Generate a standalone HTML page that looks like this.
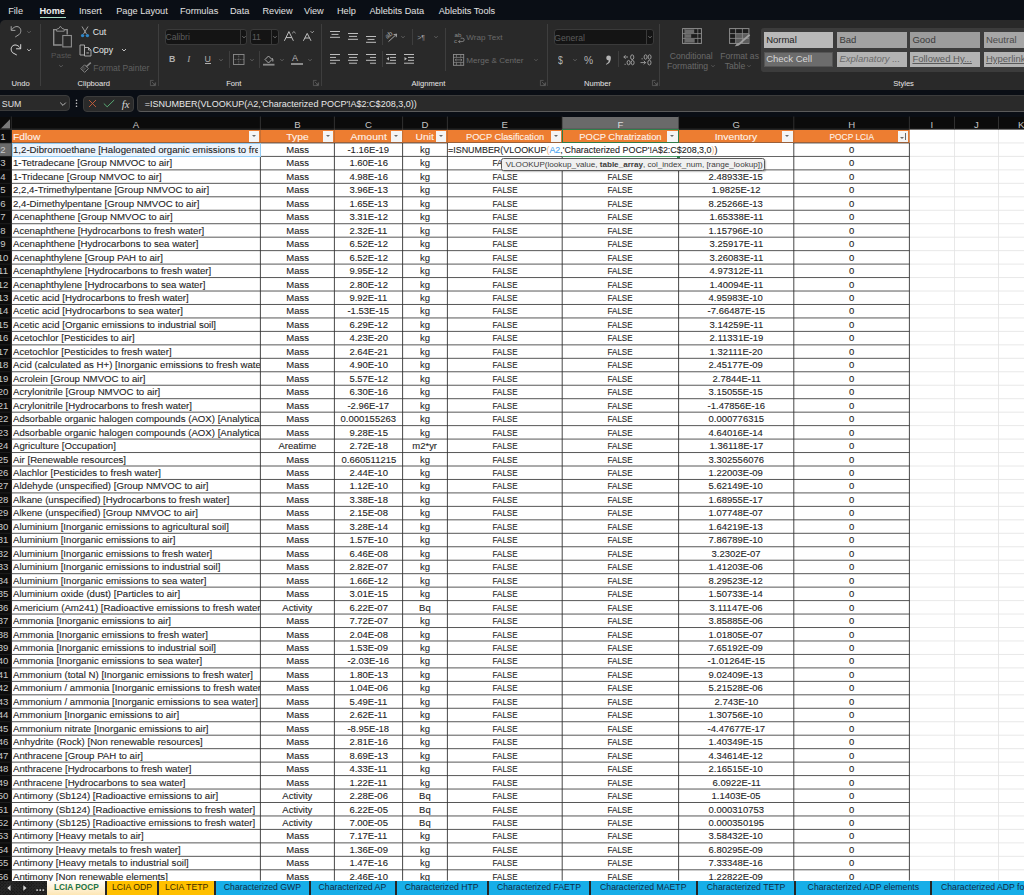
<!DOCTYPE html><html><head><meta charset="utf-8"><style>*{margin:0;padding:0;box-sizing:border-box}
html,body{width:1024px;height:895px;overflow:hidden;background:#0a0e15;font-family:"Liberation Sans",sans-serif}
.abs{position:absolute}
.colhdr{position:absolute;left:0;width:1024px;background:#0b0b0b}
.ch{position:absolute;text-align:center;color:#c4c4c4;font-size:9.6px}
.ch.sel{background:#6a6a6a;color:#dcdcdc}
.rhc{position:absolute;left:0;width:11.5px;overflow:hidden;background:#0b0b0b}
.rh{position:absolute;left:-5.5px;width:17px;color:#c8c8c8;font-size:9.6px;text-align:center;white-space:nowrap}
.rhsel{position:absolute;left:0;width:11.5px;background:#6a6a6a}
.ct{position:absolute;height:13.46px;line-height:14.5px;font-size:9.7px;color:#1e1e1e;-webkit-text-stroke:0.1px #1e1e1e;text-align:center;white-space:nowrap;overflow:hidden}
.ct span{display:inline-block;transform:scaleX(0.979);transform-origin:50% 50%}
.ct.l span{transform-origin:0 50%;transform:scaleX(0.995)}
.ct.hd span{transform:scaleX(0.936)}
.ct.hd.l span{transform:scaleX(0.98)}
.hd{color:#fff4ec;-webkit-text-stroke:0.1px #fff4ec}
.t{position:absolute;white-space:nowrap}
.fb{position:absolute;width:10.5px;height:11.5px;background:#f4f4f4}
.fb:after{content:"";position:absolute;left:3px;top:4.5px;border-left:2.3px solid transparent;border-right:2.3px solid transparent;border-top:2.6px solid #6a6a6a}
.tab{top:880.6px;height:14px;line-height:13px;font-size:9.1px;text-align:center;white-space:nowrap;overflow:hidden}
.fb.srt:after{left:2px;top:6px}
.fb.srt:before{content:"";position:absolute;left:7px;top:2.5px;width:0.9px;height:6.5px;background:#6a6a6a}
.tab span{display:inline-block;transform:scaleX(0.955)}
</style></head><body>
<div class="abs t" style="left:8.20px;top:7.01px;font-size:9.2px;line-height:9.2px;color:#e2e2e2;font-weight:400;">File</div>
<div class="abs t" style="left:39.45px;top:7.01px;font-size:9.2px;line-height:9.2px;color:#f0f0f0;font-weight:700;">Home</div>
<div class="abs t" style="left:78.95px;top:7.01px;font-size:9.2px;line-height:9.2px;color:#e2e2e2;font-weight:400;">Insert</div>
<div class="abs t" style="left:116.20px;top:7.01px;font-size:9.2px;line-height:9.2px;color:#e2e2e2;font-weight:400;">Page Layout</div>
<div class="abs t" style="left:179.95px;top:7.01px;font-size:9.2px;line-height:9.2px;color:#e2e2e2;font-weight:400;">Formulas</div>
<div class="abs t" style="left:229.95px;top:7.01px;font-size:9.2px;line-height:9.2px;color:#e2e2e2;font-weight:400;">Data</div>
<div class="abs t" style="left:262.45px;top:7.01px;font-size:9.2px;line-height:9.2px;color:#e2e2e2;font-weight:400;">Review</div>
<div class="abs t" style="left:303.95px;top:7.01px;font-size:9.2px;line-height:9.2px;color:#e2e2e2;font-weight:400;">View</div>
<div class="abs t" style="left:336.95px;top:7.01px;font-size:9.2px;line-height:9.2px;color:#e2e2e2;font-weight:400;">Help</div>
<div class="abs t" style="left:369.45px;top:7.01px;font-size:9.2px;line-height:9.2px;color:#e2e2e2;font-weight:400;">Ablebits Data</div>
<div class="abs t" style="left:438.70px;top:7.01px;font-size:9.2px;line-height:9.2px;color:#e2e2e2;font-weight:400;">Ablebits Tools</div>
<div class="abs" style="left:40px;top:16.8px;width:26px;height:1.3px;background:#a8dcc4"></div>
<div class="abs" style="left:0;top:20.2px;width:1024px;height:69.8px;background:#292929;border-top-left-radius:5px"></div>
<div class="abs" style="left:40px;top:24px;width:1px;height:62px;background:#3e3e3e"></div>
<div class="abs" style="left:157.5px;top:24px;width:1px;height:62px;background:#3e3e3e"></div>
<div class="abs" style="left:320.6px;top:24px;width:1px;height:62px;background:#3e3e3e"></div>
<div class="abs" style="left:547px;top:24px;width:1px;height:62px;background:#3e3e3e"></div>
<div class="abs" style="left:659.2px;top:24px;width:1px;height:62px;background:#3e3e3e"></div>
<svg class="abs" style="left:10px;top:25px;overflow:visible" width="12" height="13" viewBox="0 0 12 13" ><path d="M1.2 1.2 V5.4 H5.4" fill="none" stroke="#a0a0a0" stroke-width="1"/><path d="M1.5 5.1 C3 2.2 6.5 0.6 9 2.2 C11.6 4 11.2 7.6 9.3 9.4 L5.2 12" fill="none" stroke="#a0a0a0" stroke-width="1"/></svg>
<svg class="abs" style="left:25px;top:28.6px;overflow:visible" width="8" height="6" viewBox="0 0 8 6" ><path d="M2.2 2.1 L4 3.9 L5.8 2.1" fill="none" stroke="#707070" stroke-width="0.7"/></svg>
<svg class="abs" style="left:10px;top:43px;overflow:visible" width="12" height="13" viewBox="0 0 12 13" ><path d="M10.7 1.2 V5.8 H6.1" fill="none" stroke="#d8d8d8" stroke-width="1"/><path d="M10.4 5.5 C9 2.6 5.5 1 3 2.6 C0.4 4.4 0.8 8 2.7 9.8 L6.8 12" fill="none" stroke="#d8d8d8" stroke-width="1"/></svg>
<svg class="abs" style="left:25px;top:46.8px;overflow:visible" width="8" height="6" viewBox="0 0 8 6" ><path d="M2.2 2.1 L4 3.9 L5.8 2.1" fill="none" stroke="#d0d0d0" stroke-width="0.9"/></svg>
<div class="abs t" style="left:11.54px;top:79.57px;font-size:7.6px;line-height:7.6px;color:#e6e6e6;font-weight:400;">Undo</div>
<svg class="abs" style="left:52px;top:25px;overflow:visible" width="21" height="23" viewBox="0 0 21 23" ><path d="M4.6 4.6 H1.7 V20 H9.8 M12.2 4.6 H15.2 V9.6" fill="none" stroke="#8e8e8e" stroke-width="1.4"/><path d="M4.6 6.2 H12.2 V4.2 L10 3.4 L8.4 1.2 L6.8 3.4 L4.6 4.2 Z" fill="none" stroke="#8e8e8e" stroke-width="1"/><rect x="10.8" y="10.5" width="8.6" height="11.4" fill="#292929" stroke="#8e8e8e" stroke-width="1.1"/></svg>
<div class="abs t" style="left:51.12px;top:52.23px;font-size:8px;line-height:8px;color:#575757;font-weight:400;">Paste</div>
<svg class="abs" style="left:56.5px;top:62.5px;overflow:visible" width="8" height="6" viewBox="0 0 8 6" ><path d="M2.2 2.1 L4 3.9 L5.8 2.1" fill="none" stroke="#6e6e6e" stroke-width="0.7"/></svg>
<svg class="abs" style="left:80px;top:26px;overflow:visible" width="10" height="12" viewBox="0 0 10 12" ><path d="M2 0.5 L6.5 8 M8 0.5 L3.5 8" fill="none" stroke="#a8a8a8" stroke-width="0.9"/><circle cx="2.6" cy="9.6" r="1.7" fill="#2f86c8"/><circle cx="7.4" cy="9.6" r="1.7" fill="#2f86c8"/></svg>
<div class="abs t" style="left:92.78px;top:27.64px;font-size:8.7px;line-height:8.7px;color:#e6e6e6;font-weight:400;">Cut</div>
<svg class="abs" style="left:78.5px;top:43.5px;overflow:visible" width="13" height="12.5" viewBox="0 0 13 12.5" ><path d="M1 1 H5.5 V11 H1 Z" fill="none" stroke="#b4b4b4" stroke-width="0.9"/><path d="M5.5 3.5 H9.5 L12 6 V12 H5.5 Z M9.5 3.5 V6 H12" fill="none" stroke="#b4b4b4" stroke-width="0.9"/><rect x="7.4" y="8.2" width="2.5" height="1.4" fill="#8a8a8a"/></svg>
<div class="abs t" style="left:92.78px;top:45.74px;font-size:8.7px;line-height:8.7px;color:#e6e6e6;font-weight:400;">Copy</div>
<svg class="abs" style="left:119.7px;top:46.8px;overflow:visible" width="8" height="6" viewBox="0 0 8 6" ><path d="M2 2.0 L4 4.0 L6 2.0" fill="none" stroke="#d0d0d0" stroke-width="0.9"/></svg>
<svg class="abs" style="left:80px;top:62px;overflow:visible" width="12" height="11" viewBox="0 0 12 11" ><path d="M0.8 6.6 L4.6 2.8 L8.4 6.6 L4.6 10.4 Z" fill="none" stroke="#8a8a8a" stroke-width="0.9"/><path d="M1.8 7.6 L4.6 4.8 M2.9 8.7 L5.7 5.9" stroke="#8a8a8a" stroke-width="0.6"/><path d="M6.2 4.7 L10.8 0.6" stroke="#8a8a8a" stroke-width="1.5"/></svg>
<div class="abs t" style="left:93.19px;top:64.10px;font-size:8.5px;line-height:8.5px;color:#606060;font-weight:400;">Format Painter</div>
<div class="abs t" style="left:77.54px;top:79.57px;font-size:7.6px;line-height:7.6px;color:#e6e6e6;font-weight:400;">Clipboard</div>
<svg class="abs" style="left:149.6px;top:79.6px;overflow:visible" width="6" height="6" viewBox="0 0 6 6" ><path d="M0.4 0.4 H3.6 M0.4 0.4 V5.6 H5.6 V2.4 M1.8 1.8 L5 5 M5 5 H2.8 M5 5 V2.8" fill="none" stroke="#646464" stroke-width="0.7"/></svg>
<div class="abs" style="left:165px;top:29.1px;width:82.1px;height:15.8px;background:#141414;border:0.8px solid #3a3a3a;border-radius:3px"></div>
<div class="abs" style="left:239.7px;top:29.5px;width:1px;height:15.0px;background:#3a3a3a"></div>
<div class="abs t" style="left:165.48px;top:33.42px;font-size:8.6px;line-height:8.6px;color:#5c5c5c;font-weight:400;">Calibri</div>
<svg class="abs" style="left:240.4px;top:34px;overflow:visible" width="8" height="6" viewBox="0 0 8 6" ><path d="M2.4 2.2 L4 3.8 L5.6 2.2" fill="none" stroke="#8a8a8a" stroke-width="0.8"/></svg>
<div class="abs" style="left:250.4px;top:29.1px;width:28.3px;height:15.8px;background:#141414;border:0.8px solid #3a3a3a;border-radius:3px"></div>
<div class="abs" style="left:270.7px;top:29.5px;width:1px;height:15.0px;background:#3a3a3a"></div>
<div class="abs t" style="left:251.98px;top:33.42px;font-size:8.6px;line-height:8.6px;color:#5c5c5c;font-weight:400;">11</div>
<svg class="abs" style="left:270.6px;top:34px;overflow:visible" width="8" height="6" viewBox="0 0 8 6" ><path d="M2.4 2.2 L4 3.8 L5.6 2.2" fill="none" stroke="#8a8a8a" stroke-width="0.8"/></svg>
<svg class="abs" style="left:283px;top:30px;overflow:visible" width="14" height="12" viewBox="0 0 14 12" ><path d="M1.4 10.8 L5.9 1.6 L10.4 10.8 M3 7.6 H8.8" fill="none" stroke="#c0c0c0" stroke-width="1"/><path d="M9.2 3.2 L10.9 1.6 L12.6 3.2" fill="none" stroke="#c0c0c0" stroke-width="0.8"/></svg>
<svg class="abs" style="left:302px;top:30px;overflow:visible" width="14" height="12" viewBox="0 0 14 12" ><path d="M1.4 10.8 L5.2 3.4 L9 10.8 M2.8 8 H7.6" fill="none" stroke="#c0c0c0" stroke-width="1"/><path d="M8.6 1.2 L10.2 2.8 L11.8 1.2" fill="none" stroke="#c0c0c0" stroke-width="0.8"/></svg>
<div class="abs t" style="left:169.07px;top:54.85px;font-size:8.8px;line-height:8.8px;color:#b0b0b0;font-weight:700;">B</div>
<div class="abs t" style="left:187.26px;top:54.68px;font-size:9px;line-height:9px;color:#b0b0b0;font-weight:400;font-style:italic;font-family:'Liberation Serif'">I</div>
<div class="abs t" style="left:204.47px;top:54.85px;font-size:8.8px;line-height:8.8px;color:#b0b0b0;font-weight:400;">U</div>
<div class="abs" style="left:204.8px;top:63.4px;width:6.6px;height:0.9px;background:#b0b0b0"></div>
<svg class="abs" style="left:217.4px;top:56.8px;overflow:visible" width="8" height="6" viewBox="0 0 8 6" ><path d="M2.4 2.2 L4 3.8 L5.6 2.2" fill="none" stroke="#7a7a7a" stroke-width="0.7"/></svg>
<div class="abs" style="left:228.5px;top:51px;width:1px;height:17px;background:#3e3e3e"></div>
<svg class="abs" style="left:233px;top:54px;overflow:visible" width="11.5" height="11" viewBox="0 0 11.5 11" ><rect x="0.5" y="0.5" width="10.5" height="10" fill="none" stroke="#8c8c8c" stroke-width="0.9"/><path d="M5.75 0.5 V10.5 M0.5 5.5 H11" stroke="#8c8c8c" stroke-width="0.6" stroke-dasharray="1 0.6"/></svg>
<svg class="abs" style="left:247.8px;top:56.8px;overflow:visible" width="8" height="6" viewBox="0 0 8 6" ><path d="M2.4 2.2 L4 3.8 L5.6 2.2" fill="none" stroke="#7a7a7a" stroke-width="0.7"/></svg>
<div class="abs" style="left:258.8px;top:51px;width:1px;height:17px;background:#3e3e3e"></div>
<svg class="abs" style="left:263px;top:53.5px;overflow:visible" width="12" height="12" viewBox="0 0 12 12" ><path d="M2 5.5 L5.5 2 L9 5.5 L5.5 9 Z" fill="none" stroke="#b8b8b8" stroke-width="0.9"/><path d="M9 4 Q10.5 6 9.8 7.5" stroke="#b8b8b8" stroke-width="0.9" fill="none"/><rect x="0" y="9.8" width="11.5" height="1.8" fill="#8a8a8a"/></svg>
<svg class="abs" style="left:278px;top:56.8px;overflow:visible" width="8" height="6" viewBox="0 0 8 6" ><path d="M2.4 2.2 L4 3.8 L5.6 2.2" fill="none" stroke="#7a7a7a" stroke-width="0.7"/></svg>
<div class="abs t" style="left:291.96px;top:54.38px;font-size:9px;line-height:9px;color:#b8b8b8;font-weight:400;">A</div>
<div class="abs" style="left:291px;top:63px;width:11.7px;height:1.8px;background:#8a8a8a"></div>
<svg class="abs" style="left:306px;top:56.8px;overflow:visible" width="8" height="6" viewBox="0 0 8 6" ><path d="M2.4 2.2 L4 3.8 L5.6 2.2" fill="none" stroke="#7a7a7a" stroke-width="0.7"/></svg>
<div class="abs t" style="left:226.24px;top:79.57px;font-size:7.6px;line-height:7.6px;color:#e6e6e6;font-weight:400;">Font</div>
<svg class="abs" style="left:312.7px;top:79.6px;overflow:visible" width="6" height="6" viewBox="0 0 6 6" ><path d="M0.4 0.4 H3.6 M0.4 0.4 V5.6 H5.6 V2.4 M1.8 1.8 L5 5 M5 5 H2.8 M5 5 V2.8" fill="none" stroke="#646464" stroke-width="0.7"/></svg>
<svg class="abs" style="left:330.3px;top:31px;overflow:visible" width="12" height="12" viewBox="0 0 12 12" ><rect x="0" y="0.0" width="10" height="1" fill="#bdbdbd"/><rect x="1.5" y="2.9" width="7" height="1" fill="#bdbdbd"/><rect x="0" y="5.8" width="10" height="1" fill="#bdbdbd"/></svg>
<svg class="abs" style="left:348px;top:33.2px;overflow:visible" width="12" height="12" viewBox="0 0 12 12" ><rect x="0" y="0.0" width="10" height="1" fill="#bdbdbd"/><rect x="1" y="2.9" width="8" height="1" fill="#bdbdbd"/><rect x="0" y="5.8" width="10" height="1" fill="#bdbdbd"/></svg>
<svg class="abs" style="left:366.2px;top:35.5px;overflow:visible" width="12" height="12" viewBox="0 0 12 12" ><rect x="0" y="0.0" width="10" height="1" fill="#bdbdbd"/><rect x="1.5" y="2.9" width="7" height="1" fill="#bdbdbd"/><rect x="0" y="5.8" width="10" height="1" fill="#bdbdbd"/></svg>
<div class="abs" style="left:381.7px;top:29px;width:1px;height:16px;background:#3e3e3e"></div>
<svg class="abs" style="left:385px;top:30px;overflow:visible" width="13" height="13" viewBox="0 0 13 13" ><text x="0" y="7.4" font-size="6.8" fill="#b0b0b0" font-family="Liberation Sans" transform="rotate(-35 3.5 5)">ab</text><path d="M3.5 11.6 L11.6 4.2 M11.6 4.2 L8.6 4.6 M11.6 4.2 L11.2 7.2" stroke="#b0b0b0" stroke-width="0.9" fill="none"/></svg>
<svg class="abs" style="left:399px;top:33.5px;overflow:visible" width="8" height="6" viewBox="0 0 8 6" ><path d="M2.4 2.2 L4 3.8 L5.6 2.2" fill="none" stroke="#7a7a7a" stroke-width="0.7"/></svg>
<div class="abs" style="left:412.3px;top:29px;width:1px;height:16px;background:#3e3e3e"></div>
<div class="abs t" style="left:417.18px;top:33.87px;font-size:7px;line-height:7px;color:#9c9c9c;font-weight:400;">&gt;¶</div>
<svg class="abs" style="left:431.6px;top:33.5px;overflow:visible" width="8" height="6" viewBox="0 0 8 6" ><path d="M2.4 2.2 L4 3.8 L5.6 2.2" fill="none" stroke="#7a7a7a" stroke-width="0.7"/></svg>
<svg class="abs" style="left:330.3px;top:54px;overflow:visible" width="12" height="12" viewBox="0 0 12 12" ><rect x="0" y="0.0" width="10" height="1" fill="#bdbdbd"/><rect x="0" y="2.9" width="6" height="1" fill="#bdbdbd"/><rect x="0" y="5.8" width="10" height="1" fill="#bdbdbd"/><rect x="0" y="8.7" width="6" height="1" fill="#bdbdbd"/></svg>
<svg class="abs" style="left:348px;top:54px;overflow:visible" width="12" height="12" viewBox="0 0 12 12" ><rect x="0" y="0.0" width="10" height="1" fill="#bdbdbd"/><rect x="1" y="2.9" width="8" height="1" fill="#bdbdbd"/><rect x="0" y="5.8" width="10" height="1" fill="#bdbdbd"/><rect x="1" y="8.7" width="8" height="1" fill="#bdbdbd"/></svg>
<svg class="abs" style="left:366.2px;top:54px;overflow:visible" width="12" height="12" viewBox="0 0 12 12" ><rect x="0" y="0.0" width="10" height="1" fill="#bdbdbd"/><rect x="4" y="2.9" width="6" height="1" fill="#bdbdbd"/><rect x="0" y="5.8" width="10" height="1" fill="#bdbdbd"/><rect x="4" y="8.7" width="6" height="1" fill="#bdbdbd"/></svg>
<div class="abs" style="left:381.7px;top:51px;width:1px;height:16px;background:#3e3e3e"></div>
<svg class="abs" style="left:386px;top:54px;overflow:visible" width="11" height="11" viewBox="0 0 11 11" ><rect x="0" y="0" width="10" height="1" fill="#bdbdbd"/><rect x="4" y="2.9" width="6" height="1" fill="#bdbdbd"/><rect x="4" y="5.8" width="6" height="1" fill="#bdbdbd"/><rect x="0" y="8.7" width="10" height="1" fill="#bdbdbd"/><path d="M3 3 L0.5 4.8 L3 6.6 Z" fill="#bdbdbd"/></svg>
<svg class="abs" style="left:404px;top:54px;overflow:visible" width="11" height="11" viewBox="0 0 11 11" ><rect x="0" y="0" width="10" height="1" fill="#bdbdbd"/><rect x="4" y="2.9" width="6" height="1" fill="#bdbdbd"/><rect x="4" y="5.8" width="6" height="1" fill="#bdbdbd"/><rect x="0" y="8.7" width="10" height="1" fill="#bdbdbd"/><path d="M0.5 3 L3 4.8 L0.5 6.6 Z" fill="#bdbdbd"/></svg>
<div class="abs" style="left:445.3px;top:28px;width:1px;height:42.5px;background:#3e3e3e"></div>
<svg class="abs" style="left:453.5px;top:31.5px;overflow:visible" width="11" height="12" viewBox="0 0 11 12" ><text x="0.6" y="5.2" font-size="6.2" fill="#8e8e8e" font-family="Liberation Sans">ab</text><text x="0" y="11" font-size="6.2" fill="#8e8e8e" font-family="Liberation Sans">c</text><path d="M4.6 9.6 H8.2 Q10.2 9.6 10.2 7.8 Q10.2 6.2 8.4 6.2 H6.6 M6.2 8.4 L4.5 9.6 L6.2 10.9" fill="none" stroke="#8e8e8e" stroke-width="0.8"/></svg>
<div class="abs t" style="left:466.31px;top:34.44px;font-size:8.1px;line-height:8.1px;color:#6a6a6a;font-weight:400;">Wrap Text</div>
<svg class="abs" style="left:452.5px;top:53.5px;overflow:visible" width="11" height="12" viewBox="0 0 11 12" ><rect x="0.5" y="0.5" width="10.2" height="10.8" fill="none" stroke="#8e8e8e" stroke-width="0.9"/><path d="M0.5 3.4 H10.7 M0.5 8.4 H10.7 M3.4 0.5 V3.4 M7.8 0.5 V3.4 M3.4 8.4 V11.3 M7.8 8.4 V11.3" stroke="#8e8e8e" stroke-width="0.7" fill="none"/><path d="M2.2 5.9 H9 M3.6 4.8 L2.2 5.9 L3.6 7 M7.6 4.8 L9 5.9 L7.6 7" stroke="#8e8e8e" stroke-width="0.7" fill="none"/></svg>
<div class="abs t" style="left:466.31px;top:56.64px;font-size:8.1px;line-height:8.1px;color:#6a6a6a;font-weight:400;">Merge &amp; Center</div>
<svg class="abs" style="left:531.8px;top:57px;overflow:visible" width="8" height="6" viewBox="0 0 8 6" ><path d="M2.4 2.2 L4 3.8 L5.6 2.2" fill="none" stroke="#6a6a6a" stroke-width="0.7"/></svg>
<div class="abs t" style="left:411.54px;top:79.57px;font-size:7.6px;line-height:7.6px;color:#e6e6e6;font-weight:400;">Alignment</div>
<svg class="abs" style="left:539.6px;top:79.6px;overflow:visible" width="6" height="6" viewBox="0 0 6 6" ><path d="M0.4 0.4 H3.6 M0.4 0.4 V5.6 H5.6 V2.4 M1.8 1.8 L5 5 M5 5 H2.8 M5 5 V2.8" fill="none" stroke="#646464" stroke-width="0.7"/></svg>
<div class="abs" style="left:553.9px;top:29px;width:100.2px;height:16.2px;background:#141414;border:0.8px solid #3a3a3a;border-radius:3px"></div>
<div class="abs" style="left:645.6px;top:29.5px;width:1px;height:15.0px;background:#3a3a3a"></div>
<div class="abs t" style="left:554.28px;top:33.52px;font-size:8.6px;line-height:8.6px;color:#5c5c5c;font-weight:400;">General</div>
<svg class="abs" style="left:646px;top:34px;overflow:visible" width="8" height="6" viewBox="0 0 8 6" ><path d="M2.4 2.2 L4 3.8 L5.6 2.2" fill="none" stroke="#8a8a8a" stroke-width="0.8"/></svg>
<div class="abs t" style="left:557.65px;top:55.16px;font-size:10.8px;line-height:10.8px;color:#b4b4b4;font-weight:400;font-family:'Liberation Sans';transform:scaleX(0.8);transform-origin:0 0">$</div>
<svg class="abs" style="left:570.8px;top:56.8px;overflow:visible" width="8" height="6" viewBox="0 0 8 6" ><path d="M2.4 2.2 L4 3.8 L5.6 2.2" fill="none" stroke="#7a7a7a" stroke-width="0.7"/></svg>
<div class="abs t" style="left:583.85px;top:55.16px;font-size:10.8px;line-height:10.8px;color:#b4b4b4;font-weight:400;transform:scaleX(0.95);transform-origin:0 0">%</div>
<svg class="abs" style="left:605px;top:55px;overflow:visible" width="7" height="11" viewBox="0 0 7 11" ><circle cx="3.6" cy="3" r="2.4" fill="#b4b4b4"/><path d="M5.6 3.4 C5.8 6.5 4.2 8.6 1.2 9.8 L0.9 9 C2.8 8 3.8 6.8 3.8 5" fill="#b4b4b4"/></svg>
<div class="abs" style="left:618.2px;top:51px;width:1px;height:16px;background:#3e3e3e"></div>
<svg class="abs" style="left:622.5px;top:53.5px;overflow:visible" width="12" height="12" viewBox="0 0 12 12" ><path d="M5 3 H0.8 M2.6 1.2 L0.8 3 L2.6 4.8" stroke="#b4b4b4" stroke-width="0.8" fill="none"/><ellipse cx="9.2" cy="3.2" rx="1.6" ry="2.4" fill="none" stroke="#b4b4b4" stroke-width="0.8"/><rect x="1.6" y="9.8" width="1" height="1" fill="#b4b4b4"/><ellipse cx="5.6" cy="8.6" rx="1.5" ry="2.2" fill="none" stroke="#b4b4b4" stroke-width="0.8"/><ellipse cx="9.6" cy="8.6" rx="1.5" ry="2.2" fill="none" stroke="#b4b4b4" stroke-width="0.8"/></svg>
<svg class="abs" style="left:639.5px;top:53.5px;overflow:visible" width="12" height="12" viewBox="0 0 12 12" ><rect x="1.6" y="4.3" width="1" height="1" fill="#b4b4b4"/><ellipse cx="5.6" cy="3" rx="1.5" ry="2.2" fill="none" stroke="#b4b4b4" stroke-width="0.8"/><ellipse cx="9.6" cy="3" rx="1.5" ry="2.2" fill="none" stroke="#b4b4b4" stroke-width="0.8"/><path d="M0.5 8.6 H5.5 M3.8 6.8 L5.6 8.6 L3.8 10.4" stroke="#b4b4b4" stroke-width="0.8" fill="none"/><ellipse cx="9.4" cy="8.6" rx="1.6" ry="2.4" fill="none" stroke="#b4b4b4" stroke-width="0.8"/></svg>
<div class="abs t" style="left:584.04px;top:79.57px;font-size:7.6px;line-height:7.6px;color:#e6e6e6;font-weight:400;">Number</div>
<svg class="abs" style="left:652.3px;top:79.6px;overflow:visible" width="6" height="6" viewBox="0 0 6 6" ><path d="M0.4 0.4 H3.6 M0.4 0.4 V5.6 H5.6 V2.4 M1.8 1.8 L5 5 M5 5 H2.8 M5 5 V2.8" fill="none" stroke="#646464" stroke-width="0.7"/></svg>
<svg class="abs" style="left:682px;top:28px;overflow:visible" width="20" height="16" viewBox="0 0 20 16" ><rect x="0.6" y="0.6" width="18.8" height="14.8" fill="#1c1c1c" stroke="#8e8e8e" stroke-width="1"/><rect x="3.2" y="1.4" width="9" height="3.6" fill="#6c6c6c"/><rect x="3.2" y="6.2" width="6" height="3.6" fill="#6c6c6c"/><rect x="3.2" y="11" width="9.5" height="3.6" fill="#6c6c6c"/><path d="M0.6 5.6 H19.4 M0.6 10.4 H19.4" stroke="#8e8e8e" stroke-width="0.8"/><path d="M2.9 0.6 V15.4 M15.8 0.6 V15.4" stroke="#8e8e8e" stroke-width="0.7"/></svg>
<div class="abs t" style="left:669.78px;top:51.72px;font-size:8.6px;line-height:8.6px;color:#6a6a6a;font-weight:400;">Conditional</div>
<div class="abs t" style="left:667.08px;top:62.22px;font-size:8.6px;line-height:8.6px;color:#6a6a6a;font-weight:400;">Formatting</div>
<svg class="abs" style="left:708.5px;top:63.400000000000006px;overflow:visible" width="8" height="6" viewBox="0 0 8 6" ><path d="M2.4 2.2 L4 3.8 L5.6 2.2" fill="none" stroke="#6a6a6a" stroke-width="0.7"/></svg>
<svg class="abs" style="left:729px;top:28px;overflow:visible" width="22" height="19" viewBox="0 0 22 19" ><rect x="0.6" y="0.6" width="19.3" height="14.8" fill="#1c1c1c" stroke="#8e8e8e" stroke-width="1"/><rect x="6.8" y="5.8" width="12.6" height="9.2" fill="#5c5c5c"/><path d="M0.6 5.6 H19.9 M0.6 10.4 H19.9 M6.6 0.6 V15.4 M13.4 0.6 V15.4" stroke="#8e8e8e" stroke-width="0.8"/><path d="M20.6 6.8 L10.6 15.6" stroke="#a0a0a0" stroke-width="1.8"/><path d="M10.2 14.8 Q7.4 15.2 5.8 18.2 Q9.6 18.4 11.6 16.2 Z" fill="#9a9a9a"/></svg>
<div class="abs t" style="left:720.28px;top:52.02px;font-size:8.6px;line-height:8.6px;color:#6a6a6a;font-weight:400;">Format as</div>
<div class="abs t" style="left:724.78px;top:62.22px;font-size:8.6px;line-height:8.6px;color:#6a6a6a;font-weight:400;">Table</div>
<svg class="abs" style="left:745.3px;top:63.400000000000006px;overflow:visible" width="8" height="6" viewBox="0 0 8 6" ><path d="M2.4 2.2 L4 3.8 L5.6 2.2" fill="none" stroke="#6a6a6a" stroke-width="0.7"/></svg>
<div class="abs" style="left:760.8px;top:27.9px;width:270px;height:43.8px;background:#3c3c3c;border-radius:3px"></div>
<div class="abs" style="left:763.7px;top:32.3px;width:69.3px;height:15.3px;background:#b9b9b9;"></div>
<div class="abs t" style="left:766.13px;top:35.26px;font-size:9.5px;line-height:9.5px;color:#1e1e1e;font-weight:400;">Normal</div>
<div class="abs" style="left:837px;top:32.3px;width:69.6px;height:15.3px;background:#a2a2a2;"></div>
<div class="abs t" style="left:839.43px;top:35.26px;font-size:9.5px;line-height:9.5px;color:#3a3a3a;font-weight:400;">Bad</div>
<div class="abs" style="left:910px;top:32.3px;width:70.1px;height:15.3px;background:#9c9c9c;"></div>
<div class="abs t" style="left:912.43px;top:35.26px;font-size:9.5px;line-height:9.5px;color:#3a3a3a;font-weight:400;">Good</div>
<div class="abs" style="left:983.5px;top:32.3px;width:60px;height:15.3px;background:#a6a6a6;"></div>
<div class="abs t" style="left:985.93px;top:35.26px;font-size:9.5px;line-height:9.5px;color:#4a4a4a;font-weight:400;">Neutral</div>
<div class="abs" style="left:763.7px;top:51.5px;width:69.3px;height:15px;background:#6c6c6c;border:1.5px solid #555"></div>
<div class="abs t" style="left:766.13px;top:54.16px;font-size:9.5px;line-height:9.5px;color:#d8d8d8;font-weight:400;">Check Cell</div>
<div class="abs" style="left:837px;top:51.5px;width:69.6px;height:15px;background:#b3b3b3;"></div>
<div class="abs t" style="left:839.43px;top:54.16px;font-size:9.5px;line-height:9.5px;color:#6a6a6a;font-weight:400;font-style:italic">Explanatory ...</div>
<div class="abs" style="left:910px;top:51.5px;width:70.1px;height:15px;background:#b3b3b3;"></div>
<div class="abs t" style="left:912.43px;top:54.16px;font-size:9.5px;line-height:9.5px;color:#5a5a5a;font-weight:400;text-decoration:underline">Followed Hy...</div>
<div class="abs" style="left:983.5px;top:51.5px;width:60px;height:15px;background:#b3b3b3;"></div>
<div class="abs t" style="left:985.93px;top:54.16px;font-size:9.5px;line-height:9.5px;color:#5a5a5a;font-weight:400;text-decoration:underline">Hyperlink</div>
<div class="abs t" style="left:893.24px;top:79.57px;font-size:7.6px;line-height:7.6px;color:#e6e6e6;font-weight:400;">Styles</div>
<div class="abs" style="left:-4px;top:95.4px;width:73.6px;height:16px;background:#2a2a2a;border:0.8px solid #3c3c3c;border-radius:4px"></div>
<div class="abs t" style="left:1.77px;top:99.65px;font-size:8.8px;line-height:8.8px;color:#e0e0e0;font-weight:400;">SUM</div>
<svg class="abs" style="left:58.5px;top:101px;overflow:visible" width="8" height="6" viewBox="0 0 8 6" ><path d="M1.2000000000000002 1.6 L4 4.4 L6.8 1.6" fill="none" stroke="#c8c8c8" stroke-width="0.9"/></svg>
<svg class="abs" style="left:75px;top:99px;overflow:visible" width="3" height="9" viewBox="0 0 3 9" ><circle cx="1.5" cy="1.2" r="0.8" fill="#d0d0d0"/><circle cx="1.5" cy="4.2" r="0.8" fill="#d0d0d0"/><circle cx="1.5" cy="7.2" r="0.8" fill="#d0d0d0"/></svg>
<div class="abs" style="left:83.2px;top:95.5px;width:51.3px;height:16px;background:#2a2a2a;border:0.8px solid #3c3c3c;border-radius:4px"></div>
<svg class="abs" style="left:88px;top:99px;overflow:visible" width="9" height="9" viewBox="0 0 9 9" ><path d="M1 1 L8 8 M8 1 L1 8" stroke="#c8603c" stroke-width="0.9"/></svg>
<svg class="abs" style="left:103px;top:99px;overflow:visible" width="12" height="9" viewBox="0 0 12 9" ><path d="M0.8 4.5 L4.2 7.8 L11.2 1" fill="none" stroke="#5cb87c" stroke-width="0.9"/></svg>
<div class="abs t" style="left:121.85px;top:99.46px;font-size:10.8px;line-height:10.8px;color:#d8d8d8;font-weight:400;font-style:italic;font-family:'Liberation Serif'">fx</div>
<div class="abs" style="left:137.2px;top:95px;width:900px;height:17px;background:#2a2a2a;border:0.8px solid #3c3c3c;border-bottom:1px solid #5a5a5a;border-radius:4px"></div>
<div class="abs t" style="left:144.86px;top:99.68px;font-size:9px;line-height:9px;color:#e8e8e8;font-weight:400;">=ISNUMBER(VLOOKUP(A2,'Characterized POCP'!A$2:C$208,3,0))</div>
<div class="colhdr" style="top:116.5px;height:13.0px"></div>
<div class="ch" style="left:11.5px;width:248.89999999999998px;top:116.5px;height:13.0px;line-height:15.4px">A</div>
<div class="ch" style="left:260.4px;width:74.0px;top:116.5px;height:13.0px;line-height:15.4px">B</div>
<div class="ch" style="left:334.4px;width:68.20000000000005px;top:116.5px;height:13.0px;line-height:15.4px">C</div>
<div class="ch" style="left:402.6px;width:44.799999999999955px;top:116.5px;height:13.0px;line-height:15.4px">D</div>
<div class="ch" style="left:447.4px;width:114.80000000000007px;top:116.5px;height:13.0px;line-height:15.4px">E</div>
<div class="ch sel" style="left:562.2px;width:116.39999999999998px;top:116.5px;height:13.0px;line-height:15.4px">F</div>
<div class="ch" style="left:678.6px;width:115.19999999999993px;top:116.5px;height:13.0px;line-height:15.4px">G</div>
<div class="ch" style="left:793.8px;width:115.60000000000002px;top:116.5px;height:13.0px;line-height:15.4px">H</div>
<div class="ch" style="left:909.4px;width:45.10000000000002px;top:116.5px;height:13.0px;line-height:15.4px">I</div>
<div class="ch" style="left:954.5px;width:44.0px;top:116.5px;height:13.0px;line-height:15.4px">J</div>
<div class="ch" style="left:998.5px;width:45.5px;top:116.5px;height:13.0px;line-height:15.4px">K</div>
<svg class="abs" style="left:0;top:116.5px" width="12" height="13"><path d="M0.9 11.4 L10 11.4 L10 2.2 Z" fill="#7a7a7a"/></svg>
<div class="abs" style="left:11.5px;top:129.5px;width:1012.5px;height:751.1px;background:#fff"></div>
<div class="abs" style="left:11.5px;top:129.5px;width:897.9px;height:13.460000000000008px;background:#ed7d31"></div>
<div class="rhc" style="top:129.5px;height:751.1px">
<div class="rh" style="top:0.0px;height:13.46px;line-height:13.4px"><span>1</span></div>
<div class="rhsel" style="top:13.460000000000008px;height:13.46px"></div>
<div class="rh" style="top:13.460000000000008px;height:13.46px;line-height:13.4px"><span>2</span></div>
<div class="rh" style="top:26.920000000000016px;height:13.46px;line-height:13.4px"><span>3</span></div>
<div class="rh" style="top:40.379999999999995px;height:13.46px;line-height:13.4px"><span>4</span></div>
<div class="rh" style="top:53.84px;height:13.46px;line-height:13.4px"><span>5</span></div>
<div class="rh" style="top:67.30000000000001px;height:13.46px;line-height:13.4px"><span>6</span></div>
<div class="rh" style="top:80.75999999999999px;height:13.46px;line-height:13.4px"><span>7</span></div>
<div class="rh" style="top:94.22px;height:13.46px;line-height:13.4px"><span>8</span></div>
<div class="rh" style="top:107.68px;height:13.46px;line-height:13.4px"><span>9</span></div>
<div class="rh" style="top:121.14000000000001px;height:13.46px;line-height:13.4px"><span>10</span></div>
<div class="rh" style="top:134.60000000000002px;height:13.46px;line-height:13.4px"><span>11</span></div>
<div class="rh" style="top:148.06px;height:13.46px;line-height:13.4px"><span>12</span></div>
<div class="rh" style="top:161.51999999999998px;height:13.46px;line-height:13.4px"><span>13</span></div>
<div class="rh" style="top:174.98000000000002px;height:13.46px;line-height:13.4px"><span>14</span></div>
<div class="rh" style="top:188.44px;height:13.46px;line-height:13.4px"><span>15</span></div>
<div class="rh" style="top:201.89999999999998px;height:13.46px;line-height:13.4px"><span>16</span></div>
<div class="rh" style="top:215.36px;height:13.46px;line-height:13.4px"><span>17</span></div>
<div class="rh" style="top:228.82000000000005px;height:13.46px;line-height:13.4px"><span>18</span></div>
<div class="rh" style="top:242.28000000000003px;height:13.46px;line-height:13.4px"><span>19</span></div>
<div class="rh" style="top:255.74px;height:13.46px;line-height:13.4px"><span>20</span></div>
<div class="rh" style="top:269.20000000000005px;height:13.46px;line-height:13.4px"><span>21</span></div>
<div class="rh" style="top:282.66px;height:13.46px;line-height:13.4px"><span>22</span></div>
<div class="rh" style="top:296.12px;height:13.46px;line-height:13.4px"><span>23</span></div>
<div class="rh" style="top:309.58000000000004px;height:13.46px;line-height:13.4px"><span>24</span></div>
<div class="rh" style="top:323.04px;height:13.46px;line-height:13.4px"><span>25</span></div>
<div class="rh" style="top:336.5px;height:13.46px;line-height:13.4px"><span>26</span></div>
<div class="rh" style="top:349.96000000000004px;height:13.46px;line-height:13.4px"><span>27</span></div>
<div class="rh" style="top:363.42px;height:13.46px;line-height:13.4px"><span>28</span></div>
<div class="rh" style="top:376.88px;height:13.46px;line-height:13.4px"><span>29</span></div>
<div class="rh" style="top:390.34000000000003px;height:13.46px;line-height:13.4px"><span>30</span></div>
<div class="rh" style="top:403.79999999999995px;height:13.46px;line-height:13.4px"><span>31</span></div>
<div class="rh" style="top:417.26px;height:13.46px;line-height:13.4px"><span>32</span></div>
<div class="rh" style="top:430.72px;height:13.46px;line-height:13.4px"><span>33</span></div>
<div class="rh" style="top:444.18000000000006px;height:13.46px;line-height:13.4px"><span>34</span></div>
<div class="rh" style="top:457.6400000000001px;height:13.46px;line-height:13.4px"><span>35</span></div>
<div class="rh" style="top:471.1px;height:13.46px;line-height:13.4px"><span>36</span></div>
<div class="rh" style="top:484.56000000000006px;height:13.46px;line-height:13.4px"><span>37</span></div>
<div class="rh" style="top:498.02px;height:13.46px;line-height:13.4px"><span>38</span></div>
<div class="rh" style="top:511.48px;height:13.46px;line-height:13.4px"><span>39</span></div>
<div class="rh" style="top:524.94px;height:13.46px;line-height:13.4px"><span>40</span></div>
<div class="rh" style="top:538.4000000000001px;height:13.46px;line-height:13.4px"><span>41</span></div>
<div class="rh" style="top:551.86px;height:13.46px;line-height:13.4px"><span>42</span></div>
<div class="rh" style="top:565.32px;height:13.46px;line-height:13.4px"><span>43</span></div>
<div class="rh" style="top:578.7800000000001px;height:13.46px;line-height:13.4px"><span>44</span></div>
<div class="rh" style="top:592.24px;height:13.46px;line-height:13.4px"><span>45</span></div>
<div class="rh" style="top:605.7px;height:13.46px;line-height:13.4px"><span>46</span></div>
<div class="rh" style="top:619.1600000000001px;height:13.46px;line-height:13.4px"><span>47</span></div>
<div class="rh" style="top:632.62px;height:13.46px;line-height:13.4px"><span>48</span></div>
<div class="rh" style="top:646.08px;height:13.46px;line-height:13.4px"><span>49</span></div>
<div class="rh" style="top:659.5400000000001px;height:13.46px;line-height:13.4px"><span>50</span></div>
<div class="rh" style="top:673.0px;height:13.46px;line-height:13.4px"><span>51</span></div>
<div class="rh" style="top:686.46px;height:13.46px;line-height:13.4px"><span>52</span></div>
<div class="rh" style="top:699.9200000000001px;height:13.46px;line-height:13.4px"><span>53</span></div>
<div class="rh" style="top:713.38px;height:13.46px;line-height:13.4px"><span>54</span></div>
<div class="rh" style="top:726.84px;height:13.46px;line-height:13.4px"><span>55</span></div>
<div class="rh" style="top:740.3000000000001px;height:13.46px;line-height:13.4px"><span>56</span></div>
</div>
<svg class="abs" style="left:0;top:0" width="1024" height="881" viewBox="0 0 1024 881"><line x1="909.4" x2="1024" y1="129.5" y2="129.5" stroke="#e2e2e2" stroke-width="0.8"/><line x1="909.4" x2="1024" y1="142.96" y2="142.96" stroke="#e2e2e2" stroke-width="0.8"/><line x1="909.4" x2="1024" y1="156.42000000000002" y2="156.42000000000002" stroke="#e2e2e2" stroke-width="0.8"/><line x1="909.4" x2="1024" y1="169.88" y2="169.88" stroke="#e2e2e2" stroke-width="0.8"/><line x1="909.4" x2="1024" y1="183.34" y2="183.34" stroke="#e2e2e2" stroke-width="0.8"/><line x1="909.4" x2="1024" y1="196.8" y2="196.8" stroke="#e2e2e2" stroke-width="0.8"/><line x1="909.4" x2="1024" y1="210.26" y2="210.26" stroke="#e2e2e2" stroke-width="0.8"/><line x1="909.4" x2="1024" y1="223.72" y2="223.72" stroke="#e2e2e2" stroke-width="0.8"/><line x1="909.4" x2="1024" y1="237.18" y2="237.18" stroke="#e2e2e2" stroke-width="0.8"/><line x1="909.4" x2="1024" y1="250.64000000000001" y2="250.64000000000001" stroke="#e2e2e2" stroke-width="0.8"/><line x1="909.4" x2="1024" y1="264.1" y2="264.1" stroke="#e2e2e2" stroke-width="0.8"/><line x1="909.4" x2="1024" y1="277.56" y2="277.56" stroke="#e2e2e2" stroke-width="0.8"/><line x1="909.4" x2="1024" y1="291.02" y2="291.02" stroke="#e2e2e2" stroke-width="0.8"/><line x1="909.4" x2="1024" y1="304.48" y2="304.48" stroke="#e2e2e2" stroke-width="0.8"/><line x1="909.4" x2="1024" y1="317.94" y2="317.94" stroke="#e2e2e2" stroke-width="0.8"/><line x1="909.4" x2="1024" y1="331.4" y2="331.4" stroke="#e2e2e2" stroke-width="0.8"/><line x1="909.4" x2="1024" y1="344.86" y2="344.86" stroke="#e2e2e2" stroke-width="0.8"/><line x1="909.4" x2="1024" y1="358.32000000000005" y2="358.32000000000005" stroke="#e2e2e2" stroke-width="0.8"/><line x1="909.4" x2="1024" y1="371.78000000000003" y2="371.78000000000003" stroke="#e2e2e2" stroke-width="0.8"/><line x1="909.4" x2="1024" y1="385.24" y2="385.24" stroke="#e2e2e2" stroke-width="0.8"/><line x1="909.4" x2="1024" y1="398.70000000000005" y2="398.70000000000005" stroke="#e2e2e2" stroke-width="0.8"/><line x1="909.4" x2="1024" y1="412.16" y2="412.16" stroke="#e2e2e2" stroke-width="0.8"/><line x1="909.4" x2="1024" y1="425.62" y2="425.62" stroke="#e2e2e2" stroke-width="0.8"/><line x1="909.4" x2="1024" y1="439.08000000000004" y2="439.08000000000004" stroke="#e2e2e2" stroke-width="0.8"/><line x1="909.4" x2="1024" y1="452.54" y2="452.54" stroke="#e2e2e2" stroke-width="0.8"/><line x1="909.4" x2="1024" y1="466.0" y2="466.0" stroke="#e2e2e2" stroke-width="0.8"/><line x1="909.4" x2="1024" y1="479.46000000000004" y2="479.46000000000004" stroke="#e2e2e2" stroke-width="0.8"/><line x1="909.4" x2="1024" y1="492.92" y2="492.92" stroke="#e2e2e2" stroke-width="0.8"/><line x1="909.4" x2="1024" y1="506.38" y2="506.38" stroke="#e2e2e2" stroke-width="0.8"/><line x1="909.4" x2="1024" y1="519.84" y2="519.84" stroke="#e2e2e2" stroke-width="0.8"/><line x1="909.4" x2="1024" y1="533.3" y2="533.3" stroke="#e2e2e2" stroke-width="0.8"/><line x1="909.4" x2="1024" y1="546.76" y2="546.76" stroke="#e2e2e2" stroke-width="0.8"/><line x1="909.4" x2="1024" y1="560.22" y2="560.22" stroke="#e2e2e2" stroke-width="0.8"/><line x1="909.4" x2="1024" y1="573.6800000000001" y2="573.6800000000001" stroke="#e2e2e2" stroke-width="0.8"/><line x1="909.4" x2="1024" y1="587.1400000000001" y2="587.1400000000001" stroke="#e2e2e2" stroke-width="0.8"/><line x1="909.4" x2="1024" y1="600.6" y2="600.6" stroke="#e2e2e2" stroke-width="0.8"/><line x1="909.4" x2="1024" y1="614.0600000000001" y2="614.0600000000001" stroke="#e2e2e2" stroke-width="0.8"/><line x1="909.4" x2="1024" y1="627.52" y2="627.52" stroke="#e2e2e2" stroke-width="0.8"/><line x1="909.4" x2="1024" y1="640.98" y2="640.98" stroke="#e2e2e2" stroke-width="0.8"/><line x1="909.4" x2="1024" y1="654.44" y2="654.44" stroke="#e2e2e2" stroke-width="0.8"/><line x1="909.4" x2="1024" y1="667.9000000000001" y2="667.9000000000001" stroke="#e2e2e2" stroke-width="0.8"/><line x1="909.4" x2="1024" y1="681.36" y2="681.36" stroke="#e2e2e2" stroke-width="0.8"/><line x1="909.4" x2="1024" y1="694.82" y2="694.82" stroke="#e2e2e2" stroke-width="0.8"/><line x1="909.4" x2="1024" y1="708.2800000000001" y2="708.2800000000001" stroke="#e2e2e2" stroke-width="0.8"/><line x1="909.4" x2="1024" y1="721.74" y2="721.74" stroke="#e2e2e2" stroke-width="0.8"/><line x1="909.4" x2="1024" y1="735.2" y2="735.2" stroke="#e2e2e2" stroke-width="0.8"/><line x1="909.4" x2="1024" y1="748.6600000000001" y2="748.6600000000001" stroke="#e2e2e2" stroke-width="0.8"/><line x1="909.4" x2="1024" y1="762.12" y2="762.12" stroke="#e2e2e2" stroke-width="0.8"/><line x1="909.4" x2="1024" y1="775.58" y2="775.58" stroke="#e2e2e2" stroke-width="0.8"/><line x1="909.4" x2="1024" y1="789.0400000000001" y2="789.0400000000001" stroke="#e2e2e2" stroke-width="0.8"/><line x1="909.4" x2="1024" y1="802.5" y2="802.5" stroke="#e2e2e2" stroke-width="0.8"/><line x1="909.4" x2="1024" y1="815.96" y2="815.96" stroke="#e2e2e2" stroke-width="0.8"/><line x1="909.4" x2="1024" y1="829.4200000000001" y2="829.4200000000001" stroke="#e2e2e2" stroke-width="0.8"/><line x1="909.4" x2="1024" y1="842.88" y2="842.88" stroke="#e2e2e2" stroke-width="0.8"/><line x1="909.4" x2="1024" y1="856.34" y2="856.34" stroke="#e2e2e2" stroke-width="0.8"/><line x1="909.4" x2="1024" y1="869.8000000000001" y2="869.8000000000001" stroke="#e2e2e2" stroke-width="0.8"/><line x1="954.5" x2="954.5" y1="129.5" y2="880.6" stroke="#e2e2e2" stroke-width="0.8"/><line x1="998.5" x2="998.5" y1="129.5" y2="880.6" stroke="#e2e2e2" stroke-width="0.8"/><line x1="11.5" x2="909.4" y1="142.96" y2="142.96" stroke="#444" stroke-width="0.9"/><line x1="11.5" x2="909.4" y1="156.42000000000002" y2="156.42000000000002" stroke="#444" stroke-width="0.9"/><line x1="11.5" x2="909.4" y1="169.88" y2="169.88" stroke="#444" stroke-width="0.9"/><line x1="11.5" x2="909.4" y1="183.34" y2="183.34" stroke="#444" stroke-width="0.9"/><line x1="11.5" x2="909.4" y1="196.8" y2="196.8" stroke="#444" stroke-width="0.9"/><line x1="11.5" x2="909.4" y1="210.26" y2="210.26" stroke="#444" stroke-width="0.9"/><line x1="11.5" x2="909.4" y1="223.72" y2="223.72" stroke="#444" stroke-width="0.9"/><line x1="11.5" x2="909.4" y1="237.18" y2="237.18" stroke="#444" stroke-width="0.9"/><line x1="11.5" x2="909.4" y1="250.64000000000001" y2="250.64000000000001" stroke="#444" stroke-width="0.9"/><line x1="11.5" x2="909.4" y1="264.1" y2="264.1" stroke="#444" stroke-width="0.9"/><line x1="11.5" x2="909.4" y1="277.56" y2="277.56" stroke="#444" stroke-width="0.9"/><line x1="11.5" x2="909.4" y1="291.02" y2="291.02" stroke="#444" stroke-width="0.9"/><line x1="11.5" x2="909.4" y1="304.48" y2="304.48" stroke="#444" stroke-width="0.9"/><line x1="11.5" x2="909.4" y1="317.94" y2="317.94" stroke="#444" stroke-width="0.9"/><line x1="11.5" x2="909.4" y1="331.4" y2="331.4" stroke="#444" stroke-width="0.9"/><line x1="11.5" x2="909.4" y1="344.86" y2="344.86" stroke="#444" stroke-width="0.9"/><line x1="11.5" x2="909.4" y1="358.32000000000005" y2="358.32000000000005" stroke="#444" stroke-width="0.9"/><line x1="11.5" x2="909.4" y1="371.78000000000003" y2="371.78000000000003" stroke="#444" stroke-width="0.9"/><line x1="11.5" x2="909.4" y1="385.24" y2="385.24" stroke="#444" stroke-width="0.9"/><line x1="11.5" x2="909.4" y1="398.70000000000005" y2="398.70000000000005" stroke="#444" stroke-width="0.9"/><line x1="11.5" x2="909.4" y1="412.16" y2="412.16" stroke="#444" stroke-width="0.9"/><line x1="11.5" x2="909.4" y1="425.62" y2="425.62" stroke="#444" stroke-width="0.9"/><line x1="11.5" x2="909.4" y1="439.08000000000004" y2="439.08000000000004" stroke="#444" stroke-width="0.9"/><line x1="11.5" x2="909.4" y1="452.54" y2="452.54" stroke="#444" stroke-width="0.9"/><line x1="11.5" x2="909.4" y1="466.0" y2="466.0" stroke="#444" stroke-width="0.9"/><line x1="11.5" x2="909.4" y1="479.46000000000004" y2="479.46000000000004" stroke="#444" stroke-width="0.9"/><line x1="11.5" x2="909.4" y1="492.92" y2="492.92" stroke="#444" stroke-width="0.9"/><line x1="11.5" x2="909.4" y1="506.38" y2="506.38" stroke="#444" stroke-width="0.9"/><line x1="11.5" x2="909.4" y1="519.84" y2="519.84" stroke="#444" stroke-width="0.9"/><line x1="11.5" x2="909.4" y1="533.3" y2="533.3" stroke="#444" stroke-width="0.9"/><line x1="11.5" x2="909.4" y1="546.76" y2="546.76" stroke="#444" stroke-width="0.9"/><line x1="11.5" x2="909.4" y1="560.22" y2="560.22" stroke="#444" stroke-width="0.9"/><line x1="11.5" x2="909.4" y1="573.6800000000001" y2="573.6800000000001" stroke="#444" stroke-width="0.9"/><line x1="11.5" x2="909.4" y1="587.1400000000001" y2="587.1400000000001" stroke="#444" stroke-width="0.9"/><line x1="11.5" x2="909.4" y1="600.6" y2="600.6" stroke="#444" stroke-width="0.9"/><line x1="11.5" x2="909.4" y1="614.0600000000001" y2="614.0600000000001" stroke="#444" stroke-width="0.9"/><line x1="11.5" x2="909.4" y1="627.52" y2="627.52" stroke="#444" stroke-width="0.9"/><line x1="11.5" x2="909.4" y1="640.98" y2="640.98" stroke="#444" stroke-width="0.9"/><line x1="11.5" x2="909.4" y1="654.44" y2="654.44" stroke="#444" stroke-width="0.9"/><line x1="11.5" x2="909.4" y1="667.9000000000001" y2="667.9000000000001" stroke="#444" stroke-width="0.9"/><line x1="11.5" x2="909.4" y1="681.36" y2="681.36" stroke="#444" stroke-width="0.9"/><line x1="11.5" x2="909.4" y1="694.82" y2="694.82" stroke="#444" stroke-width="0.9"/><line x1="11.5" x2="909.4" y1="708.2800000000001" y2="708.2800000000001" stroke="#444" stroke-width="0.9"/><line x1="11.5" x2="909.4" y1="721.74" y2="721.74" stroke="#444" stroke-width="0.9"/><line x1="11.5" x2="909.4" y1="735.2" y2="735.2" stroke="#444" stroke-width="0.9"/><line x1="11.5" x2="909.4" y1="748.6600000000001" y2="748.6600000000001" stroke="#444" stroke-width="0.9"/><line x1="11.5" x2="909.4" y1="762.12" y2="762.12" stroke="#444" stroke-width="0.9"/><line x1="11.5" x2="909.4" y1="775.58" y2="775.58" stroke="#444" stroke-width="0.9"/><line x1="11.5" x2="909.4" y1="789.0400000000001" y2="789.0400000000001" stroke="#444" stroke-width="0.9"/><line x1="11.5" x2="909.4" y1="802.5" y2="802.5" stroke="#444" stroke-width="0.9"/><line x1="11.5" x2="909.4" y1="815.96" y2="815.96" stroke="#444" stroke-width="0.9"/><line x1="11.5" x2="909.4" y1="829.4200000000001" y2="829.4200000000001" stroke="#444" stroke-width="0.9"/><line x1="11.5" x2="909.4" y1="842.88" y2="842.88" stroke="#444" stroke-width="0.9"/><line x1="11.5" x2="909.4" y1="856.34" y2="856.34" stroke="#444" stroke-width="0.9"/><line x1="11.5" x2="909.4" y1="869.8000000000001" y2="869.8000000000001" stroke="#444" stroke-width="0.9"/><line x1="260.4" x2="260.4" y1="142.96" y2="880.6" stroke="#333" stroke-width="0.9"/><line x1="334.4" x2="334.4" y1="142.96" y2="880.6" stroke="#333" stroke-width="0.9"/><line x1="402.6" x2="402.6" y1="142.96" y2="880.6" stroke="#333" stroke-width="0.9"/><line x1="447.4" x2="447.4" y1="142.96" y2="880.6" stroke="#333" stroke-width="0.9"/><line x1="562.2" x2="562.2" y1="142.96" y2="880.6" stroke="#333" stroke-width="0.9"/><line x1="678.6" x2="678.6" y1="142.96" y2="880.6" stroke="#333" stroke-width="0.9"/><line x1="793.8" x2="793.8" y1="142.96" y2="880.6" stroke="#333" stroke-width="0.9"/><line x1="909.4" x2="909.4" y1="142.96" y2="880.6" stroke="#333" stroke-width="0.9"/><line x1="260.4" x2="260.4" y1="116.5" y2="129.5" stroke="#3a3a3a" stroke-width="0.8"/><line x1="334.4" x2="334.4" y1="116.5" y2="129.5" stroke="#3a3a3a" stroke-width="0.8"/><line x1="402.6" x2="402.6" y1="116.5" y2="129.5" stroke="#3a3a3a" stroke-width="0.8"/><line x1="447.4" x2="447.4" y1="116.5" y2="129.5" stroke="#3a3a3a" stroke-width="0.8"/><line x1="562.2" x2="562.2" y1="116.5" y2="129.5" stroke="#3a3a3a" stroke-width="0.8"/><line x1="678.6" x2="678.6" y1="116.5" y2="129.5" stroke="#3a3a3a" stroke-width="0.8"/><line x1="793.8" x2="793.8" y1="116.5" y2="129.5" stroke="#3a3a3a" stroke-width="0.8"/><line x1="909.4" x2="909.4" y1="116.5" y2="129.5" stroke="#3a3a3a" stroke-width="0.8"/><line x1="954.5" x2="954.5" y1="116.5" y2="129.5" stroke="#3a3a3a" stroke-width="0.8"/><line x1="998.5" x2="998.5" y1="116.5" y2="129.5" stroke="#3a3a3a" stroke-width="0.8"/><line x1="260.4" x2="260.4" y1="129.5" y2="142.96" stroke="#b86a35" stroke-width="0.8"/><line x1="334.4" x2="334.4" y1="129.5" y2="142.96" stroke="#b86a35" stroke-width="0.8"/><line x1="402.6" x2="402.6" y1="129.5" y2="142.96" stroke="#b86a35" stroke-width="0.8"/><line x1="447.4" x2="447.4" y1="129.5" y2="142.96" stroke="#b86a35" stroke-width="0.8"/><line x1="562.2" x2="562.2" y1="129.5" y2="142.96" stroke="#b86a35" stroke-width="0.8"/><line x1="678.6" x2="678.6" y1="129.5" y2="142.96" stroke="#b86a35" stroke-width="0.8"/><line x1="793.8" x2="793.8" y1="129.5" y2="142.96" stroke="#b86a35" stroke-width="0.8"/><line x1="909.4" x2="909.4" y1="129.5" y2="142.96" stroke="#b86a35" stroke-width="0.8"/><line x1="0" x2="1024" y1="129.2" y2="129.2" stroke="#3c3c3c" stroke-width="0.8"/><line x1="11.3" x2="11.3" y1="116.5" y2="880.6" stroke="#3c3c3c" stroke-width="0.7"/><line x1="0" x2="11.0" y1="142.96" y2="142.96" stroke="#262626" stroke-width="0.7"/><line x1="0" x2="11.0" y1="156.42000000000002" y2="156.42000000000002" stroke="#262626" stroke-width="0.7"/><line x1="0" x2="11.0" y1="169.88" y2="169.88" stroke="#262626" stroke-width="0.7"/><line x1="0" x2="11.0" y1="183.34" y2="183.34" stroke="#262626" stroke-width="0.7"/><line x1="0" x2="11.0" y1="196.8" y2="196.8" stroke="#262626" stroke-width="0.7"/><line x1="0" x2="11.0" y1="210.26" y2="210.26" stroke="#262626" stroke-width="0.7"/><line x1="0" x2="11.0" y1="223.72" y2="223.72" stroke="#262626" stroke-width="0.7"/><line x1="0" x2="11.0" y1="237.18" y2="237.18" stroke="#262626" stroke-width="0.7"/><line x1="0" x2="11.0" y1="250.64000000000001" y2="250.64000000000001" stroke="#262626" stroke-width="0.7"/><line x1="0" x2="11.0" y1="264.1" y2="264.1" stroke="#262626" stroke-width="0.7"/><line x1="0" x2="11.0" y1="277.56" y2="277.56" stroke="#262626" stroke-width="0.7"/><line x1="0" x2="11.0" y1="291.02" y2="291.02" stroke="#262626" stroke-width="0.7"/><line x1="0" x2="11.0" y1="304.48" y2="304.48" stroke="#262626" stroke-width="0.7"/><line x1="0" x2="11.0" y1="317.94" y2="317.94" stroke="#262626" stroke-width="0.7"/><line x1="0" x2="11.0" y1="331.4" y2="331.4" stroke="#262626" stroke-width="0.7"/><line x1="0" x2="11.0" y1="344.86" y2="344.86" stroke="#262626" stroke-width="0.7"/><line x1="0" x2="11.0" y1="358.32000000000005" y2="358.32000000000005" stroke="#262626" stroke-width="0.7"/><line x1="0" x2="11.0" y1="371.78000000000003" y2="371.78000000000003" stroke="#262626" stroke-width="0.7"/><line x1="0" x2="11.0" y1="385.24" y2="385.24" stroke="#262626" stroke-width="0.7"/><line x1="0" x2="11.0" y1="398.70000000000005" y2="398.70000000000005" stroke="#262626" stroke-width="0.7"/><line x1="0" x2="11.0" y1="412.16" y2="412.16" stroke="#262626" stroke-width="0.7"/><line x1="0" x2="11.0" y1="425.62" y2="425.62" stroke="#262626" stroke-width="0.7"/><line x1="0" x2="11.0" y1="439.08000000000004" y2="439.08000000000004" stroke="#262626" stroke-width="0.7"/><line x1="0" x2="11.0" y1="452.54" y2="452.54" stroke="#262626" stroke-width="0.7"/><line x1="0" x2="11.0" y1="466.0" y2="466.0" stroke="#262626" stroke-width="0.7"/><line x1="0" x2="11.0" y1="479.46000000000004" y2="479.46000000000004" stroke="#262626" stroke-width="0.7"/><line x1="0" x2="11.0" y1="492.92" y2="492.92" stroke="#262626" stroke-width="0.7"/><line x1="0" x2="11.0" y1="506.38" y2="506.38" stroke="#262626" stroke-width="0.7"/><line x1="0" x2="11.0" y1="519.84" y2="519.84" stroke="#262626" stroke-width="0.7"/><line x1="0" x2="11.0" y1="533.3" y2="533.3" stroke="#262626" stroke-width="0.7"/><line x1="0" x2="11.0" y1="546.76" y2="546.76" stroke="#262626" stroke-width="0.7"/><line x1="0" x2="11.0" y1="560.22" y2="560.22" stroke="#262626" stroke-width="0.7"/><line x1="0" x2="11.0" y1="573.6800000000001" y2="573.6800000000001" stroke="#262626" stroke-width="0.7"/><line x1="0" x2="11.0" y1="587.1400000000001" y2="587.1400000000001" stroke="#262626" stroke-width="0.7"/><line x1="0" x2="11.0" y1="600.6" y2="600.6" stroke="#262626" stroke-width="0.7"/><line x1="0" x2="11.0" y1="614.0600000000001" y2="614.0600000000001" stroke="#262626" stroke-width="0.7"/><line x1="0" x2="11.0" y1="627.52" y2="627.52" stroke="#262626" stroke-width="0.7"/><line x1="0" x2="11.0" y1="640.98" y2="640.98" stroke="#262626" stroke-width="0.7"/><line x1="0" x2="11.0" y1="654.44" y2="654.44" stroke="#262626" stroke-width="0.7"/><line x1="0" x2="11.0" y1="667.9000000000001" y2="667.9000000000001" stroke="#262626" stroke-width="0.7"/><line x1="0" x2="11.0" y1="681.36" y2="681.36" stroke="#262626" stroke-width="0.7"/><line x1="0" x2="11.0" y1="694.82" y2="694.82" stroke="#262626" stroke-width="0.7"/><line x1="0" x2="11.0" y1="708.2800000000001" y2="708.2800000000001" stroke="#262626" stroke-width="0.7"/><line x1="0" x2="11.0" y1="721.74" y2="721.74" stroke="#262626" stroke-width="0.7"/><line x1="0" x2="11.0" y1="735.2" y2="735.2" stroke="#262626" stroke-width="0.7"/><line x1="0" x2="11.0" y1="748.6600000000001" y2="748.6600000000001" stroke="#262626" stroke-width="0.7"/><line x1="0" x2="11.0" y1="762.12" y2="762.12" stroke="#262626" stroke-width="0.7"/><line x1="0" x2="11.0" y1="775.58" y2="775.58" stroke="#262626" stroke-width="0.7"/><line x1="0" x2="11.0" y1="789.0400000000001" y2="789.0400000000001" stroke="#262626" stroke-width="0.7"/><line x1="0" x2="11.0" y1="802.5" y2="802.5" stroke="#262626" stroke-width="0.7"/><line x1="0" x2="11.0" y1="815.96" y2="815.96" stroke="#262626" stroke-width="0.7"/><line x1="0" x2="11.0" y1="829.4200000000001" y2="829.4200000000001" stroke="#262626" stroke-width="0.7"/><line x1="0" x2="11.0" y1="842.88" y2="842.88" stroke="#262626" stroke-width="0.7"/><line x1="0" x2="11.0" y1="856.34" y2="856.34" stroke="#262626" stroke-width="0.7"/><line x1="0" x2="11.0" y1="869.8000000000001" y2="869.8000000000001" stroke="#262626" stroke-width="0.7"/></svg>
<div class="ct hd l" style="left:13.0px;top:129.5px;width:234.89999999999998px;text-align:left"><span style="transform:scaleX(1.056)">Fdlow</span></div>
<div class="fb" style="left:248.89999999999998px;top:130.5px"></div>
<div class="ct hd" style="left:260.4px;top:129.5px;width:74.0px"><span style="transform:scaleX(1.066)">Type</span></div>
<div class="fb" style="left:322.9px;top:130.5px"></div>
<div class="ct hd" style="left:334.4px;top:129.5px;width:68.20000000000005px"><span style="transform:scaleX(1.085)">Amount</span></div>
<div class="fb" style="left:391.1px;top:130.5px"></div>
<div class="ct hd" style="left:402.6px;top:129.5px;width:44.799999999999955px"><span style="transform:scaleX(1.066)">Unit</span></div>
<div class="fb" style="left:435.9px;top:130.5px"></div>
<div class="ct hd" style="left:447.4px;top:129.5px;width:114.80000000000007px"><span style="transform:scaleX(0.95)">POCP Clasification</span></div>
<div class="fb" style="left:550.7px;top:130.5px"></div>
<div class="ct hd" style="left:562.2px;top:129.5px;width:116.39999999999998px"><span style="transform:scaleX(0.969)">POCP Chratrization</span></div>
<div class="fb" style="left:667.1px;top:130.5px"></div>
<div class="ct hd" style="left:678.6px;top:129.5px;width:115.19999999999993px"><span style="transform:scaleX(1.066)">Inventory</span></div>
<div class="fb" style="left:782.3px;top:130.5px"></div>
<div class="ct hd" style="left:793.8px;top:129.5px;width:115.60000000000002px"><span style="transform:scaleX(0.862)">POCP LCIA</span></div>
<div class="fb srt" style="left:897.9px;top:130.5px"></div>
<div class="ct l" style="left:13.0px;top:142.96px;width:246.89999999999998px;text-align:left"><span>1,2-Dibromoethane [Halogenated organic emissions to fresh water]</span></div>
<div class="ct" style="left:260.4px;top:142.96px;width:74.0px"><span>Mass</span></div>
<div class="ct" style="left:334.4px;top:142.96px;width:68.20000000000005px"><span>-1.16E-19</span></div>
<div class="ct" style="left:402.6px;top:142.96px;width:44.799999999999955px"><span>kg</span></div>
<div class="ct" style="left:793.8px;top:142.96px;width:115.60000000000002px"><span>0</span></div>
<div class="ct l" style="left:13.0px;top:156.42000000000002px;width:246.89999999999998px;text-align:left"><span>1-Tetradecane [Group NMVOC to air]</span></div>
<div class="ct" style="left:260.4px;top:156.42000000000002px;width:74.0px"><span>Mass</span></div>
<div class="ct" style="left:334.4px;top:156.42000000000002px;width:68.20000000000005px"><span>1.60E-16</span></div>
<div class="ct" style="left:402.6px;top:156.42000000000002px;width:44.799999999999955px"><span>kg</span></div>
<div class="ct" style="left:447.4px;top:156.42000000000002px;width:114.80000000000007px"><span style="transform:scaleX(0.83)">FALSE</span></div>
<div class="ct" style="left:562.2px;top:156.42000000000002px;width:116.39999999999998px"><span style="transform:scaleX(0.83)">FALSE</span></div>
<div class="ct" style="left:793.8px;top:156.42000000000002px;width:115.60000000000002px"><span>0</span></div>
<div class="ct l" style="left:13.0px;top:169.88px;width:246.89999999999998px;text-align:left"><span>1-Tridecane [Group NMVOC to air]</span></div>
<div class="ct" style="left:260.4px;top:169.88px;width:74.0px"><span>Mass</span></div>
<div class="ct" style="left:334.4px;top:169.88px;width:68.20000000000005px"><span>4.98E-16</span></div>
<div class="ct" style="left:402.6px;top:169.88px;width:44.799999999999955px"><span>kg</span></div>
<div class="ct" style="left:447.4px;top:169.88px;width:114.80000000000007px"><span style="transform:scaleX(0.83)">FALSE</span></div>
<div class="ct" style="left:562.2px;top:169.88px;width:116.39999999999998px"><span style="transform:scaleX(0.83)">FALSE</span></div>
<div class="ct" style="left:678.6px;top:169.88px;width:115.19999999999993px"><span>2.48933E-15</span></div>
<div class="ct" style="left:793.8px;top:169.88px;width:115.60000000000002px"><span>0</span></div>
<div class="ct l" style="left:13.0px;top:183.34px;width:246.89999999999998px;text-align:left"><span>2,2,4-Trimethylpentane [Group NMVOC to air]</span></div>
<div class="ct" style="left:260.4px;top:183.34px;width:74.0px"><span>Mass</span></div>
<div class="ct" style="left:334.4px;top:183.34px;width:68.20000000000005px"><span>3.96E-13</span></div>
<div class="ct" style="left:402.6px;top:183.34px;width:44.799999999999955px"><span>kg</span></div>
<div class="ct" style="left:447.4px;top:183.34px;width:114.80000000000007px"><span style="transform:scaleX(0.83)">FALSE</span></div>
<div class="ct" style="left:562.2px;top:183.34px;width:116.39999999999998px"><span style="transform:scaleX(0.83)">FALSE</span></div>
<div class="ct" style="left:678.6px;top:183.34px;width:115.19999999999993px"><span>1.9825E-12</span></div>
<div class="ct" style="left:793.8px;top:183.34px;width:115.60000000000002px"><span>0</span></div>
<div class="ct l" style="left:13.0px;top:196.8px;width:246.89999999999998px;text-align:left"><span>2,4-Dimethylpentane [Group NMVOC to air]</span></div>
<div class="ct" style="left:260.4px;top:196.8px;width:74.0px"><span>Mass</span></div>
<div class="ct" style="left:334.4px;top:196.8px;width:68.20000000000005px"><span>1.65E-13</span></div>
<div class="ct" style="left:402.6px;top:196.8px;width:44.799999999999955px"><span>kg</span></div>
<div class="ct" style="left:447.4px;top:196.8px;width:114.80000000000007px"><span style="transform:scaleX(0.83)">FALSE</span></div>
<div class="ct" style="left:562.2px;top:196.8px;width:116.39999999999998px"><span style="transform:scaleX(0.83)">FALSE</span></div>
<div class="ct" style="left:678.6px;top:196.8px;width:115.19999999999993px"><span>8.25266E-13</span></div>
<div class="ct" style="left:793.8px;top:196.8px;width:115.60000000000002px"><span>0</span></div>
<div class="ct l" style="left:13.0px;top:210.26px;width:246.89999999999998px;text-align:left"><span>Acenaphthene [Group NMVOC to air]</span></div>
<div class="ct" style="left:260.4px;top:210.26px;width:74.0px"><span>Mass</span></div>
<div class="ct" style="left:334.4px;top:210.26px;width:68.20000000000005px"><span>3.31E-12</span></div>
<div class="ct" style="left:402.6px;top:210.26px;width:44.799999999999955px"><span>kg</span></div>
<div class="ct" style="left:447.4px;top:210.26px;width:114.80000000000007px"><span style="transform:scaleX(0.83)">FALSE</span></div>
<div class="ct" style="left:562.2px;top:210.26px;width:116.39999999999998px"><span style="transform:scaleX(0.83)">FALSE</span></div>
<div class="ct" style="left:678.6px;top:210.26px;width:115.19999999999993px"><span>1.65338E-11</span></div>
<div class="ct" style="left:793.8px;top:210.26px;width:115.60000000000002px"><span>0</span></div>
<div class="ct l" style="left:13.0px;top:223.72px;width:246.89999999999998px;text-align:left"><span>Acenaphthene [Hydrocarbons to fresh water]</span></div>
<div class="ct" style="left:260.4px;top:223.72px;width:74.0px"><span>Mass</span></div>
<div class="ct" style="left:334.4px;top:223.72px;width:68.20000000000005px"><span>2.32E-11</span></div>
<div class="ct" style="left:402.6px;top:223.72px;width:44.799999999999955px"><span>kg</span></div>
<div class="ct" style="left:447.4px;top:223.72px;width:114.80000000000007px"><span style="transform:scaleX(0.83)">FALSE</span></div>
<div class="ct" style="left:562.2px;top:223.72px;width:116.39999999999998px"><span style="transform:scaleX(0.83)">FALSE</span></div>
<div class="ct" style="left:678.6px;top:223.72px;width:115.19999999999993px"><span>1.15796E-10</span></div>
<div class="ct" style="left:793.8px;top:223.72px;width:115.60000000000002px"><span>0</span></div>
<div class="ct l" style="left:13.0px;top:237.18px;width:246.89999999999998px;text-align:left"><span>Acenaphthene [Hydrocarbons to sea water]</span></div>
<div class="ct" style="left:260.4px;top:237.18px;width:74.0px"><span>Mass</span></div>
<div class="ct" style="left:334.4px;top:237.18px;width:68.20000000000005px"><span>6.52E-12</span></div>
<div class="ct" style="left:402.6px;top:237.18px;width:44.799999999999955px"><span>kg</span></div>
<div class="ct" style="left:447.4px;top:237.18px;width:114.80000000000007px"><span style="transform:scaleX(0.83)">FALSE</span></div>
<div class="ct" style="left:562.2px;top:237.18px;width:116.39999999999998px"><span style="transform:scaleX(0.83)">FALSE</span></div>
<div class="ct" style="left:678.6px;top:237.18px;width:115.19999999999993px"><span>3.25917E-11</span></div>
<div class="ct" style="left:793.8px;top:237.18px;width:115.60000000000002px"><span>0</span></div>
<div class="ct l" style="left:13.0px;top:250.64000000000001px;width:246.89999999999998px;text-align:left"><span>Acenaphthylene [Group PAH to air]</span></div>
<div class="ct" style="left:260.4px;top:250.64000000000001px;width:74.0px"><span>Mass</span></div>
<div class="ct" style="left:334.4px;top:250.64000000000001px;width:68.20000000000005px"><span>6.52E-12</span></div>
<div class="ct" style="left:402.6px;top:250.64000000000001px;width:44.799999999999955px"><span>kg</span></div>
<div class="ct" style="left:447.4px;top:250.64000000000001px;width:114.80000000000007px"><span style="transform:scaleX(0.83)">FALSE</span></div>
<div class="ct" style="left:562.2px;top:250.64000000000001px;width:116.39999999999998px"><span style="transform:scaleX(0.83)">FALSE</span></div>
<div class="ct" style="left:678.6px;top:250.64000000000001px;width:115.19999999999993px"><span>3.26083E-11</span></div>
<div class="ct" style="left:793.8px;top:250.64000000000001px;width:115.60000000000002px"><span>0</span></div>
<div class="ct l" style="left:13.0px;top:264.1px;width:246.89999999999998px;text-align:left"><span>Acenaphthylene [Hydrocarbons to fresh water]</span></div>
<div class="ct" style="left:260.4px;top:264.1px;width:74.0px"><span>Mass</span></div>
<div class="ct" style="left:334.4px;top:264.1px;width:68.20000000000005px"><span>9.95E-12</span></div>
<div class="ct" style="left:402.6px;top:264.1px;width:44.799999999999955px"><span>kg</span></div>
<div class="ct" style="left:447.4px;top:264.1px;width:114.80000000000007px"><span style="transform:scaleX(0.83)">FALSE</span></div>
<div class="ct" style="left:562.2px;top:264.1px;width:116.39999999999998px"><span style="transform:scaleX(0.83)">FALSE</span></div>
<div class="ct" style="left:678.6px;top:264.1px;width:115.19999999999993px"><span>4.97312E-11</span></div>
<div class="ct" style="left:793.8px;top:264.1px;width:115.60000000000002px"><span>0</span></div>
<div class="ct l" style="left:13.0px;top:277.56px;width:246.89999999999998px;text-align:left"><span>Acenaphthylene [Hydrocarbons to sea water]</span></div>
<div class="ct" style="left:260.4px;top:277.56px;width:74.0px"><span>Mass</span></div>
<div class="ct" style="left:334.4px;top:277.56px;width:68.20000000000005px"><span>2.80E-12</span></div>
<div class="ct" style="left:402.6px;top:277.56px;width:44.799999999999955px"><span>kg</span></div>
<div class="ct" style="left:447.4px;top:277.56px;width:114.80000000000007px"><span style="transform:scaleX(0.83)">FALSE</span></div>
<div class="ct" style="left:562.2px;top:277.56px;width:116.39999999999998px"><span style="transform:scaleX(0.83)">FALSE</span></div>
<div class="ct" style="left:678.6px;top:277.56px;width:115.19999999999993px"><span>1.40094E-11</span></div>
<div class="ct" style="left:793.8px;top:277.56px;width:115.60000000000002px"><span>0</span></div>
<div class="ct l" style="left:13.0px;top:291.02px;width:246.89999999999998px;text-align:left"><span>Acetic acid [Hydrocarbons to fresh water]</span></div>
<div class="ct" style="left:260.4px;top:291.02px;width:74.0px"><span>Mass</span></div>
<div class="ct" style="left:334.4px;top:291.02px;width:68.20000000000005px"><span>9.92E-11</span></div>
<div class="ct" style="left:402.6px;top:291.02px;width:44.799999999999955px"><span>kg</span></div>
<div class="ct" style="left:447.4px;top:291.02px;width:114.80000000000007px"><span style="transform:scaleX(0.83)">FALSE</span></div>
<div class="ct" style="left:562.2px;top:291.02px;width:116.39999999999998px"><span style="transform:scaleX(0.83)">FALSE</span></div>
<div class="ct" style="left:678.6px;top:291.02px;width:115.19999999999993px"><span>4.95983E-10</span></div>
<div class="ct" style="left:793.8px;top:291.02px;width:115.60000000000002px"><span>0</span></div>
<div class="ct l" style="left:13.0px;top:304.48px;width:246.89999999999998px;text-align:left"><span>Acetic acid [Hydrocarbons to sea water]</span></div>
<div class="ct" style="left:260.4px;top:304.48px;width:74.0px"><span>Mass</span></div>
<div class="ct" style="left:334.4px;top:304.48px;width:68.20000000000005px"><span>-1.53E-15</span></div>
<div class="ct" style="left:402.6px;top:304.48px;width:44.799999999999955px"><span>kg</span></div>
<div class="ct" style="left:447.4px;top:304.48px;width:114.80000000000007px"><span style="transform:scaleX(0.83)">FALSE</span></div>
<div class="ct" style="left:562.2px;top:304.48px;width:116.39999999999998px"><span style="transform:scaleX(0.83)">FALSE</span></div>
<div class="ct" style="left:678.6px;top:304.48px;width:115.19999999999993px"><span>-7.66487E-15</span></div>
<div class="ct" style="left:793.8px;top:304.48px;width:115.60000000000002px"><span>0</span></div>
<div class="ct l" style="left:13.0px;top:317.94px;width:246.89999999999998px;text-align:left"><span>Acetic acid [Organic emissions to industrial soil]</span></div>
<div class="ct" style="left:260.4px;top:317.94px;width:74.0px"><span>Mass</span></div>
<div class="ct" style="left:334.4px;top:317.94px;width:68.20000000000005px"><span>6.29E-12</span></div>
<div class="ct" style="left:402.6px;top:317.94px;width:44.799999999999955px"><span>kg</span></div>
<div class="ct" style="left:447.4px;top:317.94px;width:114.80000000000007px"><span style="transform:scaleX(0.83)">FALSE</span></div>
<div class="ct" style="left:562.2px;top:317.94px;width:116.39999999999998px"><span style="transform:scaleX(0.83)">FALSE</span></div>
<div class="ct" style="left:678.6px;top:317.94px;width:115.19999999999993px"><span>3.14259E-11</span></div>
<div class="ct" style="left:793.8px;top:317.94px;width:115.60000000000002px"><span>0</span></div>
<div class="ct l" style="left:13.0px;top:331.4px;width:246.89999999999998px;text-align:left"><span>Acetochlor [Pesticides to air]</span></div>
<div class="ct" style="left:260.4px;top:331.4px;width:74.0px"><span>Mass</span></div>
<div class="ct" style="left:334.4px;top:331.4px;width:68.20000000000005px"><span>4.23E-20</span></div>
<div class="ct" style="left:402.6px;top:331.4px;width:44.799999999999955px"><span>kg</span></div>
<div class="ct" style="left:447.4px;top:331.4px;width:114.80000000000007px"><span style="transform:scaleX(0.83)">FALSE</span></div>
<div class="ct" style="left:562.2px;top:331.4px;width:116.39999999999998px"><span style="transform:scaleX(0.83)">FALSE</span></div>
<div class="ct" style="left:678.6px;top:331.4px;width:115.19999999999993px"><span>2.11331E-19</span></div>
<div class="ct" style="left:793.8px;top:331.4px;width:115.60000000000002px"><span>0</span></div>
<div class="ct l" style="left:13.0px;top:344.86px;width:246.89999999999998px;text-align:left"><span>Acetochlor [Pesticides to fresh water]</span></div>
<div class="ct" style="left:260.4px;top:344.86px;width:74.0px"><span>Mass</span></div>
<div class="ct" style="left:334.4px;top:344.86px;width:68.20000000000005px"><span>2.64E-21</span></div>
<div class="ct" style="left:402.6px;top:344.86px;width:44.799999999999955px"><span>kg</span></div>
<div class="ct" style="left:447.4px;top:344.86px;width:114.80000000000007px"><span style="transform:scaleX(0.83)">FALSE</span></div>
<div class="ct" style="left:562.2px;top:344.86px;width:116.39999999999998px"><span style="transform:scaleX(0.83)">FALSE</span></div>
<div class="ct" style="left:678.6px;top:344.86px;width:115.19999999999993px"><span>1.32111E-20</span></div>
<div class="ct" style="left:793.8px;top:344.86px;width:115.60000000000002px"><span>0</span></div>
<div class="ct l" style="left:13.0px;top:358.32000000000005px;width:246.89999999999998px;text-align:left"><span>Acid (calculated as H+) [Inorganic emissions to fresh water]</span></div>
<div class="ct" style="left:260.4px;top:358.32000000000005px;width:74.0px"><span>Mass</span></div>
<div class="ct" style="left:334.4px;top:358.32000000000005px;width:68.20000000000005px"><span>4.90E-10</span></div>
<div class="ct" style="left:402.6px;top:358.32000000000005px;width:44.799999999999955px"><span>kg</span></div>
<div class="ct" style="left:447.4px;top:358.32000000000005px;width:114.80000000000007px"><span style="transform:scaleX(0.83)">FALSE</span></div>
<div class="ct" style="left:562.2px;top:358.32000000000005px;width:116.39999999999998px"><span style="transform:scaleX(0.83)">FALSE</span></div>
<div class="ct" style="left:678.6px;top:358.32000000000005px;width:115.19999999999993px"><span>2.45177E-09</span></div>
<div class="ct" style="left:793.8px;top:358.32000000000005px;width:115.60000000000002px"><span>0</span></div>
<div class="ct l" style="left:13.0px;top:371.78000000000003px;width:246.89999999999998px;text-align:left"><span>Acrolein [Group NMVOC to air]</span></div>
<div class="ct" style="left:260.4px;top:371.78000000000003px;width:74.0px"><span>Mass</span></div>
<div class="ct" style="left:334.4px;top:371.78000000000003px;width:68.20000000000005px"><span>5.57E-12</span></div>
<div class="ct" style="left:402.6px;top:371.78000000000003px;width:44.799999999999955px"><span>kg</span></div>
<div class="ct" style="left:447.4px;top:371.78000000000003px;width:114.80000000000007px"><span style="transform:scaleX(0.83)">FALSE</span></div>
<div class="ct" style="left:562.2px;top:371.78000000000003px;width:116.39999999999998px"><span style="transform:scaleX(0.83)">FALSE</span></div>
<div class="ct" style="left:678.6px;top:371.78000000000003px;width:115.19999999999993px"><span>2.7844E-11</span></div>
<div class="ct" style="left:793.8px;top:371.78000000000003px;width:115.60000000000002px"><span>0</span></div>
<div class="ct l" style="left:13.0px;top:385.24px;width:246.89999999999998px;text-align:left"><span>Acrylonitrile [Group NMVOC to air]</span></div>
<div class="ct" style="left:260.4px;top:385.24px;width:74.0px"><span>Mass</span></div>
<div class="ct" style="left:334.4px;top:385.24px;width:68.20000000000005px"><span>6.30E-16</span></div>
<div class="ct" style="left:402.6px;top:385.24px;width:44.799999999999955px"><span>kg</span></div>
<div class="ct" style="left:447.4px;top:385.24px;width:114.80000000000007px"><span style="transform:scaleX(0.83)">FALSE</span></div>
<div class="ct" style="left:562.2px;top:385.24px;width:116.39999999999998px"><span style="transform:scaleX(0.83)">FALSE</span></div>
<div class="ct" style="left:678.6px;top:385.24px;width:115.19999999999993px"><span>3.15055E-15</span></div>
<div class="ct" style="left:793.8px;top:385.24px;width:115.60000000000002px"><span>0</span></div>
<div class="ct l" style="left:13.0px;top:398.70000000000005px;width:246.89999999999998px;text-align:left"><span>Acrylonitrile [Hydrocarbons to fresh water]</span></div>
<div class="ct" style="left:260.4px;top:398.70000000000005px;width:74.0px"><span>Mass</span></div>
<div class="ct" style="left:334.4px;top:398.70000000000005px;width:68.20000000000005px"><span>-2.96E-17</span></div>
<div class="ct" style="left:402.6px;top:398.70000000000005px;width:44.799999999999955px"><span>kg</span></div>
<div class="ct" style="left:447.4px;top:398.70000000000005px;width:114.80000000000007px"><span style="transform:scaleX(0.83)">FALSE</span></div>
<div class="ct" style="left:562.2px;top:398.70000000000005px;width:116.39999999999998px"><span style="transform:scaleX(0.83)">FALSE</span></div>
<div class="ct" style="left:678.6px;top:398.70000000000005px;width:115.19999999999993px"><span>-1.47856E-16</span></div>
<div class="ct" style="left:793.8px;top:398.70000000000005px;width:115.60000000000002px"><span>0</span></div>
<div class="ct l" style="left:13.0px;top:412.16px;width:246.89999999999998px;text-align:left"><span>Adsorbable organic halogen compounds (AOX) [Analytical measures to fresh water]</span></div>
<div class="ct" style="left:260.4px;top:412.16px;width:74.0px"><span>Mass</span></div>
<div class="ct" style="left:334.4px;top:412.16px;width:68.20000000000005px"><span>0.000155263</span></div>
<div class="ct" style="left:402.6px;top:412.16px;width:44.799999999999955px"><span>kg</span></div>
<div class="ct" style="left:447.4px;top:412.16px;width:114.80000000000007px"><span style="transform:scaleX(0.83)">FALSE</span></div>
<div class="ct" style="left:562.2px;top:412.16px;width:116.39999999999998px"><span style="transform:scaleX(0.83)">FALSE</span></div>
<div class="ct" style="left:678.6px;top:412.16px;width:115.19999999999993px"><span>0.000776315</span></div>
<div class="ct" style="left:793.8px;top:412.16px;width:115.60000000000002px"><span>0</span></div>
<div class="ct l" style="left:13.0px;top:425.62px;width:246.89999999999998px;text-align:left"><span>Adsorbable organic halogen compounds (AOX) [Analytical measures to sea water]</span></div>
<div class="ct" style="left:260.4px;top:425.62px;width:74.0px"><span>Mass</span></div>
<div class="ct" style="left:334.4px;top:425.62px;width:68.20000000000005px"><span>9.28E-15</span></div>
<div class="ct" style="left:402.6px;top:425.62px;width:44.799999999999955px"><span>kg</span></div>
<div class="ct" style="left:447.4px;top:425.62px;width:114.80000000000007px"><span style="transform:scaleX(0.83)">FALSE</span></div>
<div class="ct" style="left:562.2px;top:425.62px;width:116.39999999999998px"><span style="transform:scaleX(0.83)">FALSE</span></div>
<div class="ct" style="left:678.6px;top:425.62px;width:115.19999999999993px"><span>4.64016E-14</span></div>
<div class="ct" style="left:793.8px;top:425.62px;width:115.60000000000002px"><span>0</span></div>
<div class="ct l" style="left:13.0px;top:439.08000000000004px;width:246.89999999999998px;text-align:left"><span>Agriculture [Occupation]</span></div>
<div class="ct" style="left:260.4px;top:439.08000000000004px;width:74.0px"><span>Areatime</span></div>
<div class="ct" style="left:334.4px;top:439.08000000000004px;width:68.20000000000005px"><span>2.72E-18</span></div>
<div class="ct" style="left:402.6px;top:439.08000000000004px;width:44.799999999999955px"><span>m2*yr</span></div>
<div class="ct" style="left:447.4px;top:439.08000000000004px;width:114.80000000000007px"><span style="transform:scaleX(0.83)">FALSE</span></div>
<div class="ct" style="left:562.2px;top:439.08000000000004px;width:116.39999999999998px"><span style="transform:scaleX(0.83)">FALSE</span></div>
<div class="ct" style="left:678.6px;top:439.08000000000004px;width:115.19999999999993px"><span>1.36118E-17</span></div>
<div class="ct" style="left:793.8px;top:439.08000000000004px;width:115.60000000000002px"><span>0</span></div>
<div class="ct l" style="left:13.0px;top:452.54px;width:246.89999999999998px;text-align:left"><span>Air [Renewable resources]</span></div>
<div class="ct" style="left:260.4px;top:452.54px;width:74.0px"><span>Mass</span></div>
<div class="ct" style="left:334.4px;top:452.54px;width:68.20000000000005px"><span>0.660511215</span></div>
<div class="ct" style="left:402.6px;top:452.54px;width:44.799999999999955px"><span>kg</span></div>
<div class="ct" style="left:447.4px;top:452.54px;width:114.80000000000007px"><span style="transform:scaleX(0.83)">FALSE</span></div>
<div class="ct" style="left:562.2px;top:452.54px;width:116.39999999999998px"><span style="transform:scaleX(0.83)">FALSE</span></div>
<div class="ct" style="left:678.6px;top:452.54px;width:115.19999999999993px"><span>3.302556076</span></div>
<div class="ct" style="left:793.8px;top:452.54px;width:115.60000000000002px"><span>0</span></div>
<div class="ct l" style="left:13.0px;top:466.0px;width:246.89999999999998px;text-align:left"><span>Alachlor [Pesticides to fresh water]</span></div>
<div class="ct" style="left:260.4px;top:466.0px;width:74.0px"><span>Mass</span></div>
<div class="ct" style="left:334.4px;top:466.0px;width:68.20000000000005px"><span>2.44E-10</span></div>
<div class="ct" style="left:402.6px;top:466.0px;width:44.799999999999955px"><span>kg</span></div>
<div class="ct" style="left:447.4px;top:466.0px;width:114.80000000000007px"><span style="transform:scaleX(0.83)">FALSE</span></div>
<div class="ct" style="left:562.2px;top:466.0px;width:116.39999999999998px"><span style="transform:scaleX(0.83)">FALSE</span></div>
<div class="ct" style="left:678.6px;top:466.0px;width:115.19999999999993px"><span>1.22003E-09</span></div>
<div class="ct" style="left:793.8px;top:466.0px;width:115.60000000000002px"><span>0</span></div>
<div class="ct l" style="left:13.0px;top:479.46000000000004px;width:246.89999999999998px;text-align:left"><span>Aldehyde (unspecified) [Group NMVOC to air]</span></div>
<div class="ct" style="left:260.4px;top:479.46000000000004px;width:74.0px"><span>Mass</span></div>
<div class="ct" style="left:334.4px;top:479.46000000000004px;width:68.20000000000005px"><span>1.12E-10</span></div>
<div class="ct" style="left:402.6px;top:479.46000000000004px;width:44.799999999999955px"><span>kg</span></div>
<div class="ct" style="left:447.4px;top:479.46000000000004px;width:114.80000000000007px"><span style="transform:scaleX(0.83)">FALSE</span></div>
<div class="ct" style="left:562.2px;top:479.46000000000004px;width:116.39999999999998px"><span style="transform:scaleX(0.83)">FALSE</span></div>
<div class="ct" style="left:678.6px;top:479.46000000000004px;width:115.19999999999993px"><span>5.62149E-10</span></div>
<div class="ct" style="left:793.8px;top:479.46000000000004px;width:115.60000000000002px"><span>0</span></div>
<div class="ct l" style="left:13.0px;top:492.92px;width:246.89999999999998px;text-align:left"><span>Alkane (unspecified) [Hydrocarbons to fresh water]</span></div>
<div class="ct" style="left:260.4px;top:492.92px;width:74.0px"><span>Mass</span></div>
<div class="ct" style="left:334.4px;top:492.92px;width:68.20000000000005px"><span>3.38E-18</span></div>
<div class="ct" style="left:402.6px;top:492.92px;width:44.799999999999955px"><span>kg</span></div>
<div class="ct" style="left:447.4px;top:492.92px;width:114.80000000000007px"><span style="transform:scaleX(0.83)">FALSE</span></div>
<div class="ct" style="left:562.2px;top:492.92px;width:116.39999999999998px"><span style="transform:scaleX(0.83)">FALSE</span></div>
<div class="ct" style="left:678.6px;top:492.92px;width:115.19999999999993px"><span>1.68955E-17</span></div>
<div class="ct" style="left:793.8px;top:492.92px;width:115.60000000000002px"><span>0</span></div>
<div class="ct l" style="left:13.0px;top:506.38px;width:246.89999999999998px;text-align:left"><span>Alkene (unspecified) [Group NMVOC to air]</span></div>
<div class="ct" style="left:260.4px;top:506.38px;width:74.0px"><span>Mass</span></div>
<div class="ct" style="left:334.4px;top:506.38px;width:68.20000000000005px"><span>2.15E-08</span></div>
<div class="ct" style="left:402.6px;top:506.38px;width:44.799999999999955px"><span>kg</span></div>
<div class="ct" style="left:447.4px;top:506.38px;width:114.80000000000007px"><span style="transform:scaleX(0.83)">FALSE</span></div>
<div class="ct" style="left:562.2px;top:506.38px;width:116.39999999999998px"><span style="transform:scaleX(0.83)">FALSE</span></div>
<div class="ct" style="left:678.6px;top:506.38px;width:115.19999999999993px"><span>1.07748E-07</span></div>
<div class="ct" style="left:793.8px;top:506.38px;width:115.60000000000002px"><span>0</span></div>
<div class="ct l" style="left:13.0px;top:519.84px;width:246.89999999999998px;text-align:left"><span>Aluminium [Inorganic emissions to agricultural soil]</span></div>
<div class="ct" style="left:260.4px;top:519.84px;width:74.0px"><span>Mass</span></div>
<div class="ct" style="left:334.4px;top:519.84px;width:68.20000000000005px"><span>3.28E-14</span></div>
<div class="ct" style="left:402.6px;top:519.84px;width:44.799999999999955px"><span>kg</span></div>
<div class="ct" style="left:447.4px;top:519.84px;width:114.80000000000007px"><span style="transform:scaleX(0.83)">FALSE</span></div>
<div class="ct" style="left:562.2px;top:519.84px;width:116.39999999999998px"><span style="transform:scaleX(0.83)">FALSE</span></div>
<div class="ct" style="left:678.6px;top:519.84px;width:115.19999999999993px"><span>1.64219E-13</span></div>
<div class="ct" style="left:793.8px;top:519.84px;width:115.60000000000002px"><span>0</span></div>
<div class="ct l" style="left:13.0px;top:533.3px;width:246.89999999999998px;text-align:left"><span>Aluminium [Inorganic emissions to air]</span></div>
<div class="ct" style="left:260.4px;top:533.3px;width:74.0px"><span>Mass</span></div>
<div class="ct" style="left:334.4px;top:533.3px;width:68.20000000000005px"><span>1.57E-10</span></div>
<div class="ct" style="left:402.6px;top:533.3px;width:44.799999999999955px"><span>kg</span></div>
<div class="ct" style="left:447.4px;top:533.3px;width:114.80000000000007px"><span style="transform:scaleX(0.83)">FALSE</span></div>
<div class="ct" style="left:562.2px;top:533.3px;width:116.39999999999998px"><span style="transform:scaleX(0.83)">FALSE</span></div>
<div class="ct" style="left:678.6px;top:533.3px;width:115.19999999999993px"><span>7.86789E-10</span></div>
<div class="ct" style="left:793.8px;top:533.3px;width:115.60000000000002px"><span>0</span></div>
<div class="ct l" style="left:13.0px;top:546.76px;width:246.89999999999998px;text-align:left"><span>Aluminium [Inorganic emissions to fresh water]</span></div>
<div class="ct" style="left:260.4px;top:546.76px;width:74.0px"><span>Mass</span></div>
<div class="ct" style="left:334.4px;top:546.76px;width:68.20000000000005px"><span>6.46E-08</span></div>
<div class="ct" style="left:402.6px;top:546.76px;width:44.799999999999955px"><span>kg</span></div>
<div class="ct" style="left:447.4px;top:546.76px;width:114.80000000000007px"><span style="transform:scaleX(0.83)">FALSE</span></div>
<div class="ct" style="left:562.2px;top:546.76px;width:116.39999999999998px"><span style="transform:scaleX(0.83)">FALSE</span></div>
<div class="ct" style="left:678.6px;top:546.76px;width:115.19999999999993px"><span>3.2302E-07</span></div>
<div class="ct" style="left:793.8px;top:546.76px;width:115.60000000000002px"><span>0</span></div>
<div class="ct l" style="left:13.0px;top:560.22px;width:246.89999999999998px;text-align:left"><span>Aluminium [Inorganic emissions to industrial soil]</span></div>
<div class="ct" style="left:260.4px;top:560.22px;width:74.0px"><span>Mass</span></div>
<div class="ct" style="left:334.4px;top:560.22px;width:68.20000000000005px"><span>2.82E-07</span></div>
<div class="ct" style="left:402.6px;top:560.22px;width:44.799999999999955px"><span>kg</span></div>
<div class="ct" style="left:447.4px;top:560.22px;width:114.80000000000007px"><span style="transform:scaleX(0.83)">FALSE</span></div>
<div class="ct" style="left:562.2px;top:560.22px;width:116.39999999999998px"><span style="transform:scaleX(0.83)">FALSE</span></div>
<div class="ct" style="left:678.6px;top:560.22px;width:115.19999999999993px"><span>1.41203E-06</span></div>
<div class="ct" style="left:793.8px;top:560.22px;width:115.60000000000002px"><span>0</span></div>
<div class="ct l" style="left:13.0px;top:573.6800000000001px;width:246.89999999999998px;text-align:left"><span>Aluminium [Inorganic emissions to sea water]</span></div>
<div class="ct" style="left:260.4px;top:573.6800000000001px;width:74.0px"><span>Mass</span></div>
<div class="ct" style="left:334.4px;top:573.6800000000001px;width:68.20000000000005px"><span>1.66E-12</span></div>
<div class="ct" style="left:402.6px;top:573.6800000000001px;width:44.799999999999955px"><span>kg</span></div>
<div class="ct" style="left:447.4px;top:573.6800000000001px;width:114.80000000000007px"><span style="transform:scaleX(0.83)">FALSE</span></div>
<div class="ct" style="left:562.2px;top:573.6800000000001px;width:116.39999999999998px"><span style="transform:scaleX(0.83)">FALSE</span></div>
<div class="ct" style="left:678.6px;top:573.6800000000001px;width:115.19999999999993px"><span>8.29523E-12</span></div>
<div class="ct" style="left:793.8px;top:573.6800000000001px;width:115.60000000000002px"><span>0</span></div>
<div class="ct l" style="left:13.0px;top:587.1400000000001px;width:246.89999999999998px;text-align:left"><span>Aluminium oxide (dust) [Particles to air]</span></div>
<div class="ct" style="left:260.4px;top:587.1400000000001px;width:74.0px"><span>Mass</span></div>
<div class="ct" style="left:334.4px;top:587.1400000000001px;width:68.20000000000005px"><span>3.01E-15</span></div>
<div class="ct" style="left:402.6px;top:587.1400000000001px;width:44.799999999999955px"><span>kg</span></div>
<div class="ct" style="left:447.4px;top:587.1400000000001px;width:114.80000000000007px"><span style="transform:scaleX(0.83)">FALSE</span></div>
<div class="ct" style="left:562.2px;top:587.1400000000001px;width:116.39999999999998px"><span style="transform:scaleX(0.83)">FALSE</span></div>
<div class="ct" style="left:678.6px;top:587.1400000000001px;width:115.19999999999993px"><span>1.50733E-14</span></div>
<div class="ct" style="left:793.8px;top:587.1400000000001px;width:115.60000000000002px"><span>0</span></div>
<div class="ct l" style="left:13.0px;top:600.6px;width:246.89999999999998px;text-align:left"><span>Americium (Am241) [Radioactive emissions to fresh water]</span></div>
<div class="ct" style="left:260.4px;top:600.6px;width:74.0px"><span>Activity</span></div>
<div class="ct" style="left:334.4px;top:600.6px;width:68.20000000000005px"><span>6.22E-07</span></div>
<div class="ct" style="left:402.6px;top:600.6px;width:44.799999999999955px"><span>Bq</span></div>
<div class="ct" style="left:447.4px;top:600.6px;width:114.80000000000007px"><span style="transform:scaleX(0.83)">FALSE</span></div>
<div class="ct" style="left:562.2px;top:600.6px;width:116.39999999999998px"><span style="transform:scaleX(0.83)">FALSE</span></div>
<div class="ct" style="left:678.6px;top:600.6px;width:115.19999999999993px"><span>3.11147E-06</span></div>
<div class="ct" style="left:793.8px;top:600.6px;width:115.60000000000002px"><span>0</span></div>
<div class="ct l" style="left:13.0px;top:614.0600000000001px;width:246.89999999999998px;text-align:left"><span>Ammonia [Inorganic emissions to air]</span></div>
<div class="ct" style="left:260.4px;top:614.0600000000001px;width:74.0px"><span>Mass</span></div>
<div class="ct" style="left:334.4px;top:614.0600000000001px;width:68.20000000000005px"><span>7.72E-07</span></div>
<div class="ct" style="left:402.6px;top:614.0600000000001px;width:44.799999999999955px"><span>kg</span></div>
<div class="ct" style="left:447.4px;top:614.0600000000001px;width:114.80000000000007px"><span style="transform:scaleX(0.83)">FALSE</span></div>
<div class="ct" style="left:562.2px;top:614.0600000000001px;width:116.39999999999998px"><span style="transform:scaleX(0.83)">FALSE</span></div>
<div class="ct" style="left:678.6px;top:614.0600000000001px;width:115.19999999999993px"><span>3.85885E-06</span></div>
<div class="ct" style="left:793.8px;top:614.0600000000001px;width:115.60000000000002px"><span>0</span></div>
<div class="ct l" style="left:13.0px;top:627.52px;width:246.89999999999998px;text-align:left"><span>Ammonia [Inorganic emissions to fresh water]</span></div>
<div class="ct" style="left:260.4px;top:627.52px;width:74.0px"><span>Mass</span></div>
<div class="ct" style="left:334.4px;top:627.52px;width:68.20000000000005px"><span>2.04E-08</span></div>
<div class="ct" style="left:402.6px;top:627.52px;width:44.799999999999955px"><span>kg</span></div>
<div class="ct" style="left:447.4px;top:627.52px;width:114.80000000000007px"><span style="transform:scaleX(0.83)">FALSE</span></div>
<div class="ct" style="left:562.2px;top:627.52px;width:116.39999999999998px"><span style="transform:scaleX(0.83)">FALSE</span></div>
<div class="ct" style="left:678.6px;top:627.52px;width:115.19999999999993px"><span>1.01805E-07</span></div>
<div class="ct" style="left:793.8px;top:627.52px;width:115.60000000000002px"><span>0</span></div>
<div class="ct l" style="left:13.0px;top:640.98px;width:246.89999999999998px;text-align:left"><span>Ammonia [Inorganic emissions to industrial soil]</span></div>
<div class="ct" style="left:260.4px;top:640.98px;width:74.0px"><span>Mass</span></div>
<div class="ct" style="left:334.4px;top:640.98px;width:68.20000000000005px"><span>1.53E-09</span></div>
<div class="ct" style="left:402.6px;top:640.98px;width:44.799999999999955px"><span>kg</span></div>
<div class="ct" style="left:447.4px;top:640.98px;width:114.80000000000007px"><span style="transform:scaleX(0.83)">FALSE</span></div>
<div class="ct" style="left:562.2px;top:640.98px;width:116.39999999999998px"><span style="transform:scaleX(0.83)">FALSE</span></div>
<div class="ct" style="left:678.6px;top:640.98px;width:115.19999999999993px"><span>7.65192E-09</span></div>
<div class="ct" style="left:793.8px;top:640.98px;width:115.60000000000002px"><span>0</span></div>
<div class="ct l" style="left:13.0px;top:654.44px;width:246.89999999999998px;text-align:left"><span>Ammonia [Inorganic emissions to sea water]</span></div>
<div class="ct" style="left:260.4px;top:654.44px;width:74.0px"><span>Mass</span></div>
<div class="ct" style="left:334.4px;top:654.44px;width:68.20000000000005px"><span>-2.03E-16</span></div>
<div class="ct" style="left:402.6px;top:654.44px;width:44.799999999999955px"><span>kg</span></div>
<div class="ct" style="left:447.4px;top:654.44px;width:114.80000000000007px"><span style="transform:scaleX(0.83)">FALSE</span></div>
<div class="ct" style="left:562.2px;top:654.44px;width:116.39999999999998px"><span style="transform:scaleX(0.83)">FALSE</span></div>
<div class="ct" style="left:678.6px;top:654.44px;width:115.19999999999993px"><span>-1.01264E-15</span></div>
<div class="ct" style="left:793.8px;top:654.44px;width:115.60000000000002px"><span>0</span></div>
<div class="ct l" style="left:13.0px;top:667.9000000000001px;width:246.89999999999998px;text-align:left"><span>Ammonium (total N) [Inorganic emissions to fresh water]</span></div>
<div class="ct" style="left:260.4px;top:667.9000000000001px;width:74.0px"><span>Mass</span></div>
<div class="ct" style="left:334.4px;top:667.9000000000001px;width:68.20000000000005px"><span>1.80E-13</span></div>
<div class="ct" style="left:402.6px;top:667.9000000000001px;width:44.799999999999955px"><span>kg</span></div>
<div class="ct" style="left:447.4px;top:667.9000000000001px;width:114.80000000000007px"><span style="transform:scaleX(0.83)">FALSE</span></div>
<div class="ct" style="left:562.2px;top:667.9000000000001px;width:116.39999999999998px"><span style="transform:scaleX(0.83)">FALSE</span></div>
<div class="ct" style="left:678.6px;top:667.9000000000001px;width:115.19999999999993px"><span>9.02409E-13</span></div>
<div class="ct" style="left:793.8px;top:667.9000000000001px;width:115.60000000000002px"><span>0</span></div>
<div class="ct l" style="left:13.0px;top:681.36px;width:246.89999999999998px;text-align:left"><span>Ammonium / ammonia [Inorganic emissions to fresh water]</span></div>
<div class="ct" style="left:260.4px;top:681.36px;width:74.0px"><span>Mass</span></div>
<div class="ct" style="left:334.4px;top:681.36px;width:68.20000000000005px"><span>1.04E-06</span></div>
<div class="ct" style="left:402.6px;top:681.36px;width:44.799999999999955px"><span>kg</span></div>
<div class="ct" style="left:447.4px;top:681.36px;width:114.80000000000007px"><span style="transform:scaleX(0.83)">FALSE</span></div>
<div class="ct" style="left:562.2px;top:681.36px;width:116.39999999999998px"><span style="transform:scaleX(0.83)">FALSE</span></div>
<div class="ct" style="left:678.6px;top:681.36px;width:115.19999999999993px"><span>5.21528E-06</span></div>
<div class="ct" style="left:793.8px;top:681.36px;width:115.60000000000002px"><span>0</span></div>
<div class="ct l" style="left:13.0px;top:694.82px;width:246.89999999999998px;text-align:left"><span>Ammonium / ammonia [Inorganic emissions to sea water]</span></div>
<div class="ct" style="left:260.4px;top:694.82px;width:74.0px"><span>Mass</span></div>
<div class="ct" style="left:334.4px;top:694.82px;width:68.20000000000005px"><span>5.49E-11</span></div>
<div class="ct" style="left:402.6px;top:694.82px;width:44.799999999999955px"><span>kg</span></div>
<div class="ct" style="left:447.4px;top:694.82px;width:114.80000000000007px"><span style="transform:scaleX(0.83)">FALSE</span></div>
<div class="ct" style="left:562.2px;top:694.82px;width:116.39999999999998px"><span style="transform:scaleX(0.83)">FALSE</span></div>
<div class="ct" style="left:678.6px;top:694.82px;width:115.19999999999993px"><span>2.743E-10</span></div>
<div class="ct" style="left:793.8px;top:694.82px;width:115.60000000000002px"><span>0</span></div>
<div class="ct l" style="left:13.0px;top:708.2800000000001px;width:246.89999999999998px;text-align:left"><span>Ammonium [Inorganic emissions to air]</span></div>
<div class="ct" style="left:260.4px;top:708.2800000000001px;width:74.0px"><span>Mass</span></div>
<div class="ct" style="left:334.4px;top:708.2800000000001px;width:68.20000000000005px"><span>2.62E-11</span></div>
<div class="ct" style="left:402.6px;top:708.2800000000001px;width:44.799999999999955px"><span>kg</span></div>
<div class="ct" style="left:447.4px;top:708.2800000000001px;width:114.80000000000007px"><span style="transform:scaleX(0.83)">FALSE</span></div>
<div class="ct" style="left:562.2px;top:708.2800000000001px;width:116.39999999999998px"><span style="transform:scaleX(0.83)">FALSE</span></div>
<div class="ct" style="left:678.6px;top:708.2800000000001px;width:115.19999999999993px"><span>1.30756E-10</span></div>
<div class="ct" style="left:793.8px;top:708.2800000000001px;width:115.60000000000002px"><span>0</span></div>
<div class="ct l" style="left:13.0px;top:721.74px;width:246.89999999999998px;text-align:left"><span>Ammonium nitrate [Inorganic emissions to air]</span></div>
<div class="ct" style="left:260.4px;top:721.74px;width:74.0px"><span>Mass</span></div>
<div class="ct" style="left:334.4px;top:721.74px;width:68.20000000000005px"><span>-8.95E-18</span></div>
<div class="ct" style="left:402.6px;top:721.74px;width:44.799999999999955px"><span>kg</span></div>
<div class="ct" style="left:447.4px;top:721.74px;width:114.80000000000007px"><span style="transform:scaleX(0.83)">FALSE</span></div>
<div class="ct" style="left:562.2px;top:721.74px;width:116.39999999999998px"><span style="transform:scaleX(0.83)">FALSE</span></div>
<div class="ct" style="left:678.6px;top:721.74px;width:115.19999999999993px"><span>-4.47677E-17</span></div>
<div class="ct" style="left:793.8px;top:721.74px;width:115.60000000000002px"><span>0</span></div>
<div class="ct l" style="left:13.0px;top:735.2px;width:246.89999999999998px;text-align:left"><span>Anhydrite (Rock) [Non renewable resources]</span></div>
<div class="ct" style="left:260.4px;top:735.2px;width:74.0px"><span>Mass</span></div>
<div class="ct" style="left:334.4px;top:735.2px;width:68.20000000000005px"><span>2.81E-16</span></div>
<div class="ct" style="left:402.6px;top:735.2px;width:44.799999999999955px"><span>kg</span></div>
<div class="ct" style="left:447.4px;top:735.2px;width:114.80000000000007px"><span style="transform:scaleX(0.83)">FALSE</span></div>
<div class="ct" style="left:562.2px;top:735.2px;width:116.39999999999998px"><span style="transform:scaleX(0.83)">FALSE</span></div>
<div class="ct" style="left:678.6px;top:735.2px;width:115.19999999999993px"><span>1.40349E-15</span></div>
<div class="ct" style="left:793.8px;top:735.2px;width:115.60000000000002px"><span>0</span></div>
<div class="ct l" style="left:13.0px;top:748.6600000000001px;width:246.89999999999998px;text-align:left"><span>Anthracene [Group PAH to air]</span></div>
<div class="ct" style="left:260.4px;top:748.6600000000001px;width:74.0px"><span>Mass</span></div>
<div class="ct" style="left:334.4px;top:748.6600000000001px;width:68.20000000000005px"><span>8.69E-13</span></div>
<div class="ct" style="left:402.6px;top:748.6600000000001px;width:44.799999999999955px"><span>kg</span></div>
<div class="ct" style="left:447.4px;top:748.6600000000001px;width:114.80000000000007px"><span style="transform:scaleX(0.83)">FALSE</span></div>
<div class="ct" style="left:562.2px;top:748.6600000000001px;width:116.39999999999998px"><span style="transform:scaleX(0.83)">FALSE</span></div>
<div class="ct" style="left:678.6px;top:748.6600000000001px;width:115.19999999999993px"><span>4.34614E-12</span></div>
<div class="ct" style="left:793.8px;top:748.6600000000001px;width:115.60000000000002px"><span>0</span></div>
<div class="ct l" style="left:13.0px;top:762.12px;width:246.89999999999998px;text-align:left"><span>Anthracene [Hydrocarbons to fresh water]</span></div>
<div class="ct" style="left:260.4px;top:762.12px;width:74.0px"><span>Mass</span></div>
<div class="ct" style="left:334.4px;top:762.12px;width:68.20000000000005px"><span>4.33E-11</span></div>
<div class="ct" style="left:402.6px;top:762.12px;width:44.799999999999955px"><span>kg</span></div>
<div class="ct" style="left:447.4px;top:762.12px;width:114.80000000000007px"><span style="transform:scaleX(0.83)">FALSE</span></div>
<div class="ct" style="left:562.2px;top:762.12px;width:116.39999999999998px"><span style="transform:scaleX(0.83)">FALSE</span></div>
<div class="ct" style="left:678.6px;top:762.12px;width:115.19999999999993px"><span>2.16515E-10</span></div>
<div class="ct" style="left:793.8px;top:762.12px;width:115.60000000000002px"><span>0</span></div>
<div class="ct l" style="left:13.0px;top:775.58px;width:246.89999999999998px;text-align:left"><span>Anthracene [Hydrocarbons to sea water]</span></div>
<div class="ct" style="left:260.4px;top:775.58px;width:74.0px"><span>Mass</span></div>
<div class="ct" style="left:334.4px;top:775.58px;width:68.20000000000005px"><span>1.22E-11</span></div>
<div class="ct" style="left:402.6px;top:775.58px;width:44.799999999999955px"><span>kg</span></div>
<div class="ct" style="left:447.4px;top:775.58px;width:114.80000000000007px"><span style="transform:scaleX(0.83)">FALSE</span></div>
<div class="ct" style="left:562.2px;top:775.58px;width:116.39999999999998px"><span style="transform:scaleX(0.83)">FALSE</span></div>
<div class="ct" style="left:678.6px;top:775.58px;width:115.19999999999993px"><span>6.0922E-11</span></div>
<div class="ct" style="left:793.8px;top:775.58px;width:115.60000000000002px"><span>0</span></div>
<div class="ct l" style="left:13.0px;top:789.0400000000001px;width:246.89999999999998px;text-align:left"><span>Antimony (Sb124) [Radioactive emissions to air]</span></div>
<div class="ct" style="left:260.4px;top:789.0400000000001px;width:74.0px"><span>Activity</span></div>
<div class="ct" style="left:334.4px;top:789.0400000000001px;width:68.20000000000005px"><span>2.28E-06</span></div>
<div class="ct" style="left:402.6px;top:789.0400000000001px;width:44.799999999999955px"><span>Bq</span></div>
<div class="ct" style="left:447.4px;top:789.0400000000001px;width:114.80000000000007px"><span style="transform:scaleX(0.83)">FALSE</span></div>
<div class="ct" style="left:562.2px;top:789.0400000000001px;width:116.39999999999998px"><span style="transform:scaleX(0.83)">FALSE</span></div>
<div class="ct" style="left:678.6px;top:789.0400000000001px;width:115.19999999999993px"><span>1.1403E-05</span></div>
<div class="ct" style="left:793.8px;top:789.0400000000001px;width:115.60000000000002px"><span>0</span></div>
<div class="ct l" style="left:13.0px;top:802.5px;width:246.89999999999998px;text-align:left"><span>Antimony (Sb124) [Radioactive emissions to fresh water]</span></div>
<div class="ct" style="left:260.4px;top:802.5px;width:74.0px"><span>Activity</span></div>
<div class="ct" style="left:334.4px;top:802.5px;width:68.20000000000005px"><span>6.22E-05</span></div>
<div class="ct" style="left:402.6px;top:802.5px;width:44.799999999999955px"><span>Bq</span></div>
<div class="ct" style="left:447.4px;top:802.5px;width:114.80000000000007px"><span style="transform:scaleX(0.83)">FALSE</span></div>
<div class="ct" style="left:562.2px;top:802.5px;width:116.39999999999998px"><span style="transform:scaleX(0.83)">FALSE</span></div>
<div class="ct" style="left:678.6px;top:802.5px;width:115.19999999999993px"><span>0.000310753</span></div>
<div class="ct" style="left:793.8px;top:802.5px;width:115.60000000000002px"><span>0</span></div>
<div class="ct l" style="left:13.0px;top:815.96px;width:246.89999999999998px;text-align:left"><span>Antimony (Sb125) [Radioactive emissions to fresh water]</span></div>
<div class="ct" style="left:260.4px;top:815.96px;width:74.0px"><span>Activity</span></div>
<div class="ct" style="left:334.4px;top:815.96px;width:68.20000000000005px"><span>7.00E-05</span></div>
<div class="ct" style="left:402.6px;top:815.96px;width:44.799999999999955px"><span>Bq</span></div>
<div class="ct" style="left:447.4px;top:815.96px;width:114.80000000000007px"><span style="transform:scaleX(0.83)">FALSE</span></div>
<div class="ct" style="left:562.2px;top:815.96px;width:116.39999999999998px"><span style="transform:scaleX(0.83)">FALSE</span></div>
<div class="ct" style="left:678.6px;top:815.96px;width:115.19999999999993px"><span>0.000350195</span></div>
<div class="ct" style="left:793.8px;top:815.96px;width:115.60000000000002px"><span>0</span></div>
<div class="ct l" style="left:13.0px;top:829.4200000000001px;width:246.89999999999998px;text-align:left"><span>Antimony [Heavy metals to air]</span></div>
<div class="ct" style="left:260.4px;top:829.4200000000001px;width:74.0px"><span>Mass</span></div>
<div class="ct" style="left:334.4px;top:829.4200000000001px;width:68.20000000000005px"><span>7.17E-11</span></div>
<div class="ct" style="left:402.6px;top:829.4200000000001px;width:44.799999999999955px"><span>kg</span></div>
<div class="ct" style="left:447.4px;top:829.4200000000001px;width:114.80000000000007px"><span style="transform:scaleX(0.83)">FALSE</span></div>
<div class="ct" style="left:562.2px;top:829.4200000000001px;width:116.39999999999998px"><span style="transform:scaleX(0.83)">FALSE</span></div>
<div class="ct" style="left:678.6px;top:829.4200000000001px;width:115.19999999999993px"><span>3.58432E-10</span></div>
<div class="ct" style="left:793.8px;top:829.4200000000001px;width:115.60000000000002px"><span>0</span></div>
<div class="ct l" style="left:13.0px;top:842.88px;width:246.89999999999998px;text-align:left"><span>Antimony [Heavy metals to fresh water]</span></div>
<div class="ct" style="left:260.4px;top:842.88px;width:74.0px"><span>Mass</span></div>
<div class="ct" style="left:334.4px;top:842.88px;width:68.20000000000005px"><span>1.36E-09</span></div>
<div class="ct" style="left:402.6px;top:842.88px;width:44.799999999999955px"><span>kg</span></div>
<div class="ct" style="left:447.4px;top:842.88px;width:114.80000000000007px"><span style="transform:scaleX(0.83)">FALSE</span></div>
<div class="ct" style="left:562.2px;top:842.88px;width:116.39999999999998px"><span style="transform:scaleX(0.83)">FALSE</span></div>
<div class="ct" style="left:678.6px;top:842.88px;width:115.19999999999993px"><span>6.80295E-09</span></div>
<div class="ct" style="left:793.8px;top:842.88px;width:115.60000000000002px"><span>0</span></div>
<div class="ct l" style="left:13.0px;top:856.34px;width:246.89999999999998px;text-align:left"><span>Antimony [Heavy metals to industrial soil]</span></div>
<div class="ct" style="left:260.4px;top:856.34px;width:74.0px"><span>Mass</span></div>
<div class="ct" style="left:334.4px;top:856.34px;width:68.20000000000005px"><span>1.47E-16</span></div>
<div class="ct" style="left:402.6px;top:856.34px;width:44.799999999999955px"><span>kg</span></div>
<div class="ct" style="left:447.4px;top:856.34px;width:114.80000000000007px"><span style="transform:scaleX(0.83)">FALSE</span></div>
<div class="ct" style="left:562.2px;top:856.34px;width:116.39999999999998px"><span style="transform:scaleX(0.83)">FALSE</span></div>
<div class="ct" style="left:678.6px;top:856.34px;width:115.19999999999993px"><span>7.33348E-16</span></div>
<div class="ct" style="left:793.8px;top:856.34px;width:115.60000000000002px"><span>0</span></div>
<div class="ct l" style="left:13.0px;top:869.8000000000001px;width:246.89999999999998px;text-align:left"><span>Antimony [Non renewable elements]</span></div>
<div class="ct" style="left:260.4px;top:869.8000000000001px;width:74.0px"><span>Mass</span></div>
<div class="ct" style="left:334.4px;top:869.8000000000001px;width:68.20000000000005px"><span>2.46E-10</span></div>
<div class="ct" style="left:402.6px;top:869.8000000000001px;width:44.799999999999955px"><span>kg</span></div>
<div class="ct" style="left:447.4px;top:869.8000000000001px;width:114.80000000000007px"><span style="transform:scaleX(0.83)">FALSE</span></div>
<div class="ct" style="left:562.2px;top:869.8000000000001px;width:116.39999999999998px"><span style="transform:scaleX(0.83)">FALSE</span></div>
<div class="ct" style="left:678.6px;top:869.8000000000001px;width:115.19999999999993px"><span>1.22822E-09</span></div>
<div class="ct" style="left:793.8px;top:869.8000000000001px;width:115.60000000000002px"><span>0</span></div>
<div class="abs" style="left:11.5px;top:142.66px;width:249.6px;height:14.060000000000008px;background:#eaf3fc;border:1px solid #92ccf5"></div>
<div class="ct l" style="left:13px;top:142.96px;width:245px;text-align:left"><span>1,2-Dibromoethane [Halogenated organic emissions to fresh water]</span></div>
<div class="abs" style="left:448px;top:143.46px;width:345.3px;height:12.460000000000008px;background:#fff"></div>
<div class="abs" style="left:561.8px;top:129.3px;width:117.2px;height:13.660000000000007px;border:1px solid #2e7d4a;border-bottom-width:1px"></div>
<div class="abs" style="left:561.8px;top:155.82000000000002px;width:117.2px;height:0.9px;background:#4c9a66"></div>
<div class="abs" style="left:677px;top:155.62px;width:2.6px;height:2.6px;background:#2e7d4a"></div>
<div class="ct l" style="left:447.9px;top:142.96px;width:345px;text-align:left;overflow:visible"><span style="transform:scaleX(0.921)">=ISNUMBER(VLOOKUP<b style="font-weight:400;color:#f3b98a;-webkit-text-stroke-color:#f3b98a">(</b><b style="font-weight:400;color:#4aa3f0;-webkit-text-stroke-color:#4aa3f0">A2</b>,'Characterized POCP'!A$2:C$208,3,0<b style="font-weight:400;color:#f3b98a;-webkit-text-stroke-color:#f3b98a">)</b>)</span></div>
<div class="abs" style="left:501.2px;top:158.2px;width:264px;height:12.9px;background:#f0f0f0;border:1px solid #5a5a5a;border-radius:2.5px;box-shadow:1px 1px 1.5px rgba(0,0,0,0.25)"></div>
<div class="abs t" style="left:505.71px;top:160.64px;font-size:8.1px;line-height:8.1px;color:#3c3c3c;font-weight:400;">VLOOKUP(lookup_value, <b>table_array</b>, col_index_num, [range_lookup])</div>
<div class="abs" style="left:0;top:880.6px;width:1024px;height:15px;background:#262626"></div>
<div class="abs" style="left:0;top:880.6px;width:47.5px;height:15px;background-color:#1b1b1b;background-image:repeating-linear-gradient(45deg,#262626 0 1px,transparent 1px 2.2px),repeating-linear-gradient(-45deg,#262626 0 1px,transparent 1px 2.2px)"></div>
<svg class="abs" style="left:6.5px;top:884.5px;overflow:visible" width="4" height="6" viewBox="0 0 4 6" ><path d="M3.5 0.3 L0.3 3 L3.5 5.7 Z" fill="#d8d8d8"/></svg>
<svg class="abs" style="left:22.7px;top:884.5px;overflow:visible" width="4" height="6" viewBox="0 0 4 6" ><path d="M0.3 0.3 L3.5 3 L0.3 5.7 Z" fill="#d8d8d8"/></svg>
<svg class="abs" style="left:36px;top:888.6px;overflow:visible" width="9" height="2.5" viewBox="0 0 9 2.5" ><rect x="0.3" y="0.3" width="1.6" height="1.6" fill="#d0d0d0"/><rect x="3.4" y="0.3" width="1.6" height="1.6" fill="#d0d0d0"/><rect x="6.5" y="0.3" width="1.6" height="1.6" fill="#d0d0d0"/></svg>
<div class="abs" style="left:47.3px;top:880.6px;width:58.10000000000001px;height:15px;background:linear-gradient(#fffdf8,#fde6b4);border-bottom:1.5px solid #1f5e3a"></div>
<div class="abs tab" style="left:47.3px;width:58.10000000000001px;color:#217346;font-weight:700;font-size:8.3px">LCIA POCP</div>
<div class="abs" style="left:106.5px;top:880.6px;width:50.69999999999999px;height:15px;background:#ffc000"></div>
<div class="abs tab" style="left:106.5px;width:50.69999999999999px;color:#3b2b00;"><span style="">LCIA ODP</span></div>
<div class="abs" style="left:159.4px;top:880.6px;width:54.79999999999998px;height:15px;background:#ffc000"></div>
<div class="abs tab" style="left:159.4px;width:54.79999999999998px;color:#3b2b00;"><span style="">LCIA TETP</span></div>
<div class="abs" style="left:215.5px;top:880.6px;width:93.39999999999998px;height:15px;background:#17aee8"></div>
<div class="abs tab" style="left:215.5px;width:93.39999999999998px;color:#0e2a44;"><span style="">Characterized GWP</span></div>
<div class="abs" style="left:311px;top:880.6px;width:83.60000000000002px;height:15px;background:#17aee8"></div>
<div class="abs tab" style="left:311px;width:83.60000000000002px;color:#0e2a44;"><span style="">Characterized AP</span></div>
<div class="abs" style="left:396.9px;top:880.6px;width:89.70000000000005px;height:15px;background:#17aee8"></div>
<div class="abs tab" style="left:396.9px;width:89.70000000000005px;color:#0e2a44;"><span style="">Characterized HTP</span></div>
<div class="abs" style="left:489px;top:880.6px;width:99.60000000000002px;height:15px;background:#17aee8"></div>
<div class="abs tab" style="left:489px;width:99.60000000000002px;color:#0e2a44;"><span style="">Characterized FAETP</span></div>
<div class="abs" style="left:591px;top:880.6px;width:104.60000000000002px;height:15px;background:#17aee8"></div>
<div class="abs tab" style="left:591px;width:104.60000000000002px;color:#0e2a44;"><span style="">Characterized MAETP</span></div>
<div class="abs" style="left:698px;top:880.6px;width:96.29999999999995px;height:15px;background:#17aee8"></div>
<div class="abs tab" style="left:698px;width:96.29999999999995px;color:#0e2a44;"><span style="">Characterized TETP</span></div>
<div class="abs" style="left:795.8px;top:880.6px;width:134.20000000000005px;height:15px;background:#17aee8"></div>
<div class="abs tab" style="left:795.8px;width:134.20000000000005px;color:#0e2a44;"><span style="">Characterized ADP elements</span></div>
<div class="abs" style="left:932.2px;top:880.6px;width:107.79999999999995px;height:15px;background:#17aee8"></div>
<div class="abs tab" style="left:932.2px;width:107.79999999999995px;color:#0e2a44;text-align:left;padding-left:8.6px;"><span style="transform-origin:0 50%">Characterized ADP fossil</span></div>
</body></html>
